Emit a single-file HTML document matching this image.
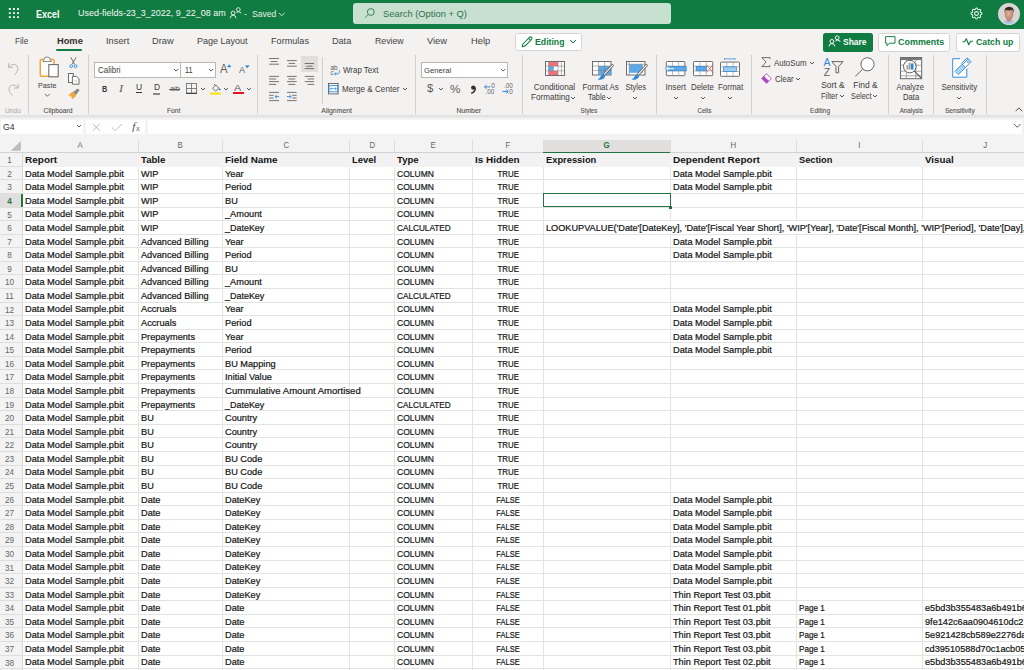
<!DOCTYPE html>
<html><head><meta charset="utf-8"><style>
html,body{margin:0;padding:0;width:1024px;height:670px;overflow:hidden;background:#fff}
body{position:relative}
.t{position:absolute;white-space:nowrap;line-height:1;font-family:'Liberation Sans', sans-serif}
svg{display:block}
</style></head><body>
<div style="position:absolute;left:0.00px;top:0.00px;width:1024.00px;height:29.30px;background:#107c41"></div><svg style="position:absolute;left:0px;top:0px;overflow:visible" width="30" height="28" viewBox="0 0 30 28"><rect x="8.85" y="8.12" width="1.9" height="1.9" rx="0.3" fill="#fff"/><rect x="8.85" y="12.14" width="1.9" height="1.9" rx="0.3" fill="#fff"/><rect x="8.85" y="16.16" width="1.9" height="1.9" rx="0.3" fill="#fff"/><rect x="12.95" y="8.12" width="1.9" height="1.9" rx="0.3" fill="#fff"/><rect x="12.95" y="12.14" width="1.9" height="1.9" rx="0.3" fill="#fff"/><rect x="12.95" y="16.16" width="1.9" height="1.9" rx="0.3" fill="#fff"/><rect x="17.05" y="8.12" width="1.9" height="1.9" rx="0.3" fill="#fff"/><rect x="17.05" y="12.14" width="1.9" height="1.9" rx="0.3" fill="#fff"/><rect x="17.05" y="16.16" width="1.9" height="1.9" rx="0.3" fill="#fff"/></svg><div class="t" style="left:36.40px;top:9.09px;font-size:10.6px;color:#fff;font-weight:700;transform:scaleX(0.8524);transform-origin:left 0;">Excel</div><div class="t" style="left:77.60px;top:9.49px;font-size:9.3px;color:#f4f8f5;transform:scaleX(0.9654);transform-origin:left 0;">Used-fields-23_3_2022, 9_22_08 am</div><svg style="position:absolute;left:229px;top:6.5px;overflow:visible" width="14" height="13" viewBox="0 0 14 13"><g fill="none" stroke="#e3efe7" stroke-width="0.95"><circle cx="4.1" cy="6" r="1.9"/><path d="M1.2 11.2 Q1.4 8.2 4.1 8.2 Q6.8 8.2 7 11.2"/><circle cx="9.3" cy="2.6" r="1.9"/><path d="M7.8 6 Q8 4.8 9.3 4.8 Q12 4.8 12.2 6.4"/></g></svg><div class="t" style="left:244.10px;top:9.59px;font-size:9.3px;color:#e3efe7;transform:scaleX(0.9005);transform-origin:left 0;">-</div><div class="t" style="left:251.70px;top:9.59px;font-size:9.3px;color:#e3efe7;transform:scaleX(0.9251);transform-origin:left 0;">Saved</div><svg style="position:absolute;left:278.09999999999997px;top:11.85px;overflow:visible" width="7.6" height="4.7" viewBox="0 0 7.6 4.7"><path d="M1 1 L3.8 3.7 L6.6 1" fill="none" stroke="#e3efe7" stroke-width="0.9"/></svg><div style="position:absolute;left:353.00px;top:2.80px;width:317.50px;height:21.10px;background:#c8e0d0;border-radius:3px"></div><svg style="position:absolute;left:364px;top:7px;overflow:visible" width="12" height="12" viewBox="0 0 12 12"><g fill="none" stroke="#3d7f58" stroke-width="1"><circle cx="6.8" cy="5" r="3.4"/><path d="M4.4 7.4 L1.3 10.6"/></g></svg><div class="t" style="left:383.10px;top:9.58px;font-size:9.2px;color:#2f6f4a;transform:scaleX(1.0174);transform-origin:left 0;">Search (Option + Q)</div><svg style="position:absolute;left:969.9px;top:6.9px;overflow:visible" width="13" height="13" viewBox="0 0 13 13"><g transform="translate(6.5,6.5)" fill="none" stroke="#e6f1ea" stroke-width="1.05" stroke-linejoin="round"><path d="M0.00 -5.40 L0.21 -5.40 L0.42 -5.38 L0.62 -5.26 L0.79 -5.00 L0.94 -4.71 L1.06 -4.41 L1.17 -4.14 L1.30 -3.99 L1.45 -3.94 L1.61 -3.88 L1.76 -3.81 L1.91 -3.74 L2.10 -3.76 L2.37 -3.87 L2.67 -3.99 L2.97 -4.09 L3.28 -4.16 L3.51 -4.11 L3.67 -3.97 L3.82 -3.82 L3.97 -3.67 L4.11 -3.51 L4.16 -3.28 L4.09 -2.97 L3.99 -2.67 L3.87 -2.37 L3.76 -2.10 L3.74 -1.91 L3.81 -1.76 L3.88 -1.61 L3.94 -1.45 L3.99 -1.30 L4.14 -1.17 L4.41 -1.06 L4.71 -0.94 L5.00 -0.79 L5.26 -0.62 L5.38 -0.42 L5.40 -0.21 L5.40 -0.00 L5.40 0.21 L5.38 0.42 L5.26 0.62 L5.00 0.79 L4.71 0.94 L4.41 1.06 L4.14 1.17 L3.99 1.30 L3.94 1.45 L3.88 1.61 L3.81 1.76 L3.74 1.91 L3.76 2.10 L3.87 2.37 L3.99 2.67 L4.09 2.97 L4.16 3.28 L4.11 3.51 L3.97 3.67 L3.82 3.82 L3.67 3.97 L3.51 4.11 L3.28 4.16 L2.97 4.09 L2.67 3.99 L2.37 3.87 L2.10 3.76 L1.91 3.74 L1.76 3.81 L1.61 3.88 L1.45 3.94 L1.30 3.99 L1.17 4.14 L1.06 4.41 L0.94 4.71 L0.79 5.00 L0.62 5.26 L0.42 5.38 L0.21 5.40 L0.00 5.40 L-0.21 5.40 L-0.42 5.38 L-0.62 5.26 L-0.79 5.00 L-0.94 4.71 L-1.06 4.41 L-1.17 4.14 L-1.30 3.99 L-1.45 3.94 L-1.61 3.88 L-1.76 3.81 L-1.91 3.74 L-2.10 3.76 L-2.37 3.87 L-2.67 3.99 L-2.97 4.09 L-3.28 4.16 L-3.51 4.11 L-3.67 3.97 L-3.82 3.82 L-3.97 3.67 L-4.11 3.51 L-4.16 3.28 L-4.09 2.97 L-3.99 2.67 L-3.87 2.37 L-3.76 2.10 L-3.74 1.91 L-3.81 1.76 L-3.88 1.61 L-3.94 1.45 L-3.99 1.30 L-4.14 1.17 L-4.41 1.06 L-4.71 0.94 L-5.00 0.79 L-5.26 0.62 L-5.38 0.42 L-5.40 0.21 L-5.40 0.00 L-5.40 -0.21 L-5.38 -0.42 L-5.26 -0.62 L-5.00 -0.79 L-4.71 -0.94 L-4.41 -1.06 L-4.14 -1.17 L-3.99 -1.30 L-3.94 -1.45 L-3.88 -1.61 L-3.81 -1.76 L-3.74 -1.91 L-3.76 -2.10 L-3.87 -2.37 L-3.99 -2.67 L-4.09 -2.97 L-4.16 -3.28 L-4.11 -3.51 L-3.97 -3.67 L-3.82 -3.82 L-3.67 -3.97 L-3.51 -4.11 L-3.28 -4.16 L-2.97 -4.09 L-2.67 -3.99 L-2.37 -3.87 L-2.10 -3.76 L-1.91 -3.74 L-1.76 -3.81 L-1.61 -3.88 L-1.45 -3.94 L-1.30 -3.99 L-1.17 -4.14 L-1.06 -4.41 L-0.94 -4.71 L-0.79 -5.00 L-0.62 -5.26 L-0.42 -5.38 L-0.21 -5.40 Z"/><circle r="1.9"/></g></svg><svg style="position:absolute;left:998px;top:2.9px;overflow:visible" width="22" height="22" viewBox="0 0 22 22"><defs><clipPath id="av"><circle cx="11" cy="11" r="10.8"/></clipPath><radialGradient id="fg" cx="0.45" cy="0.45" r="0.65"><stop offset="0" stop-color="#e0b49c"/><stop offset="1" stop-color="#b07a66"/></radialGradient></defs><g clip-path="url(#av)"><rect width="22" height="22" fill="#d8d5d4"/><path d="M2.5 24 Q4 17 11 16.6 Q18 17 19.5 24Z" fill="#b4c7e2"/><path d="M8.6 14 H13.4 V18 Q11 19.4 8.6 18Z" fill="#c08a74"/><ellipse cx="11" cy="11" rx="4.4" ry="5.6" fill="url(#fg)"/><path d="M6.4 10.2 Q5.8 3.8 11.2 3.8 Q16.4 3.8 15.8 10 Q15.4 7.2 13.6 6.8 Q11 7.8 8 6.8 Q6.8 7.6 6.4 10.2Z" fill="#3a2a23"/></g><circle cx="11" cy="11" r="10.7" fill="none" stroke="#e6e6e6" stroke-width="0.5"/></svg><div style="position:absolute;left:0.00px;top:29.30px;width:1024.00px;height:85.70px;background:#f3f2f1"></div><div class="t" style="left:14.60px;top:36.55px;font-size:9px;color:#424242;transform:scaleX(0.9163);transform-origin:left 0;">File</div><div class="t" style="left:56.50px;top:36.55px;font-size:9px;color:#323130;font-weight:700;transform:scaleX(1.0314);transform-origin:left 0;">Home</div><div class="t" style="left:105.60px;top:36.55px;font-size:9px;color:#424242;transform:scaleX(1.0348);transform-origin:left 0;">Insert</div><div class="t" style="left:152.30px;top:36.55px;font-size:9px;color:#424242;transform:scaleX(1.0278);transform-origin:left 0;">Draw</div><div class="t" style="left:197.00px;top:36.55px;font-size:9px;color:#424242;">Page Layout</div><div class="t" style="left:271.00px;top:36.55px;font-size:9px;color:#424242;transform:scaleX(1.0129);transform-origin:left 0;">Formulas</div><div class="t" style="left:332.30px;top:36.55px;font-size:9px;color:#424242;transform:scaleX(1.0097);transform-origin:left 0;">Data</div><div class="t" style="left:375.30px;top:36.55px;font-size:9px;color:#424242;transform:scaleX(0.9724);transform-origin:left 0;">Review</div><div class="t" style="left:427.30px;top:36.55px;font-size:9px;color:#424242;transform:scaleX(1.0331);transform-origin:left 0;">View</div><div class="t" style="left:470.50px;top:36.55px;font-size:9px;color:#424242;transform:scaleX(1.0424);transform-origin:left 0;">Help</div><div style="position:absolute;left:56.10px;top:48.80px;width:26.20px;height:1.90px;background:#107c41;border-radius:1px"></div><div style="position:absolute;left:515.40px;top:32.60px;width:66.40px;height:18.40px;background:#fff;border:0.75px solid #d6d4d2;border-radius:2.5px;box-sizing:border-box"></div><svg style="position:absolute;left:520.5px;top:36px;overflow:visible" width="12" height="12" viewBox="0 0 12 12"><g fill="none" stroke="#107c41" stroke-width="1.05" stroke-linejoin="round"><path d="M1.2 10.8 L1.9 8 L8.7 1.2 Q9.7 0.5 10.6 1.4 Q11.4 2.3 10.7 3.3 L3.9 10.1 Z"/><path d="M7.6 2.3 L9.7 4.4"/></g></svg><div class="t" style="left:534.90px;top:37.99px;font-size:9.3px;color:#107c41;font-weight:700;transform:scaleX(0.9365);transform-origin:left 0;">Editing</div><svg style="position:absolute;left:569.2px;top:39.1px;overflow:visible" width="8" height="5" viewBox="0 0 8 5"><path d="M1 1 L4.0 4 L7 1" fill="none" stroke="#107c41" stroke-width="1.0"/></svg><div style="position:absolute;left:823.20px;top:32.50px;width:49.60px;height:19.00px;background:#107c41;border-radius:2.5px"></div><svg style="position:absolute;left:828.3px;top:35.3px;overflow:visible" width="13" height="12" viewBox="0 0 13 12"><g fill="none" stroke="#fff" stroke-width="1"><circle cx="3.9" cy="6.4" r="1.9"/><path d="M1 11.4 Q1.2 8.6 3.9 8.6 Q6.6 8.6 6.8 11.4"/><circle cx="9.2" cy="2.8" r="1.9"/><path d="M7.6 6.4 Q7.8 5 9.2 5 Q12 5 12.2 7"/></g></svg><div class="t" style="left:842.50px;top:37.98px;font-size:9.2px;color:#fff;font-weight:700;transform:scaleX(0.9199);transform-origin:left 0;">Share</div><div style="position:absolute;left:878.30px;top:32.50px;width:72.00px;height:19.00px;background:#fff;border:0.75px solid #d6d4d2;border-radius:2.5px;box-sizing:border-box"></div><svg style="position:absolute;left:884.5px;top:36.3px;overflow:visible" width="11" height="11" viewBox="0 0 11 11"><path d="M0.6 0.6 H10 V7.2 H4.4 L2 9.8 V7.2 H0.6 Z" fill="none" stroke="#107c41" stroke-width="0.95" stroke-linejoin="round"/></svg><div class="t" style="left:897.70px;top:37.98px;font-size:9.2px;color:#107c41;font-weight:700;transform:scaleX(0.9751);transform-origin:left 0;">Comments</div><div style="position:absolute;left:956.20px;top:32.50px;width:63.50px;height:19.00px;background:#fff;border:0.75px solid #d6d4d2;border-radius:2.5px;box-sizing:border-box"></div><svg style="position:absolute;left:961.6px;top:37.2px;overflow:visible" width="12" height="10" viewBox="0 0 12 10"><path d="M0.5 4.8 H2.6 L4.3 1.8 L6.7 7.8 L8.5 4.2 H11" fill="none" stroke="#107c41" stroke-width="1.1" stroke-linejoin="round"/></svg><div class="t" style="left:975.60px;top:37.98px;font-size:9.2px;color:#107c41;font-weight:700;transform:scaleX(0.9514);transform-origin:left 0;">Catch up</div><div style="position:absolute;left:28.05px;top:54.50px;width:0.75px;height:59.00px;background:#d2d0ce"></div><div style="position:absolute;left:87.65px;top:54.50px;width:0.75px;height:59.00px;background:#d2d0ce"></div><div style="position:absolute;left:257.45px;top:54.50px;width:0.75px;height:59.00px;background:#d2d0ce"></div><div style="position:absolute;left:415.15px;top:54.50px;width:0.75px;height:59.00px;background:#d2d0ce"></div><div style="position:absolute;left:522.25px;top:54.50px;width:0.75px;height:59.00px;background:#d2d0ce"></div><div style="position:absolute;left:656.15px;top:54.50px;width:0.75px;height:59.00px;background:#d2d0ce"></div><div style="position:absolute;left:751.15px;top:54.50px;width:0.75px;height:59.00px;background:#d2d0ce"></div><div style="position:absolute;left:887.95px;top:54.50px;width:0.75px;height:59.00px;background:#d2d0ce"></div><div style="position:absolute;left:932.85px;top:54.50px;width:0.75px;height:59.00px;background:#d2d0ce"></div><div style="position:absolute;left:985.75px;top:54.50px;width:0.75px;height:59.00px;background:#d2d0ce"></div><div style="position:absolute;left:321.65px;top:56.80px;width:0.75px;height:46.80px;background:#d2d0ce"></div><div class="t" style="left:5.02px;top:107.69px;font-size:6.6px;color:#b3b0ad;transform:scaleX(1.0085);transform-origin:center 0;-webkit-text-stroke:0.1px #b3b0ad;">Undo</div><div class="t" style="left:44.18px;top:107.69px;font-size:6.6px;color:#55534f;transform:scaleX(1.0271);transform-origin:center 0;-webkit-text-stroke:0.1px #55534f;">Clipboard</div><div class="t" style="left:167.10px;top:107.69px;font-size:6.6px;color:#55534f;transform:scaleX(1.0149);transform-origin:center 0;-webkit-text-stroke:0.1px #55534f;">Font</div><div class="t" style="left:321.74px;top:107.69px;font-size:6.6px;color:#55534f;transform:scaleX(1.0468);transform-origin:center 0;-webkit-text-stroke:0.1px #55534f;">Alignment</div><div class="t" style="left:456.67px;top:107.69px;font-size:6.6px;color:#55534f;transform:scaleX(1.0489);transform-origin:center 0;-webkit-text-stroke:0.1px #55534f;">Number</div><div class="t" style="left:580.12px;top:107.69px;font-size:6.6px;color:#55534f;transform:scaleX(0.9350);transform-origin:center 0;-webkit-text-stroke:0.1px #55534f;">Styles</div><div class="t" style="left:696.67px;top:107.69px;font-size:6.6px;color:#55534f;transform:scaleX(0.9484);transform-origin:center 0;-webkit-text-stroke:0.1px #55534f;">Cells</div><div class="t" style="left:809.71px;top:107.69px;font-size:6.6px;color:#55534f;transform:scaleX(0.9964);transform-origin:center 0;-webkit-text-stroke:0.1px #55534f;">Editing</div><div class="t" style="left:898.52px;top:107.69px;font-size:6.6px;color:#55534f;transform:scaleX(0.9405);transform-origin:center 0;-webkit-text-stroke:0.1px #55534f;">Analysis</div><div class="t" style="left:944.76px;top:107.69px;font-size:6.6px;color:#55534f;transform:scaleX(1.0072);transform-origin:center 0;-webkit-text-stroke:0.1px #55534f;">Sensitivity</div><svg style="position:absolute;left:7px;top:62px;overflow:visible" width="13" height="34" viewBox="0 0 13 34"><g fill="none" stroke="#b3b0ad" stroke-width="0.9" stroke-linecap="round" stroke-linejoin="round"><path d="M1.6 1.6 V5.4 H5.4"/><path d="M1.8 5.2 Q4.4 1.8 7.6 2.4 Q11 3.2 10.9 6.6 Q10.8 9.6 7.9 12.6"/><path d="M11.2 22.2 V26 H7.4"/><path d="M11 25.8 Q8.4 22.4 5.2 23 Q1.8 23.8 1.9 27.2 Q2 30.2 4.9 33.2"/></g></svg><svg style="position:absolute;left:39px;top:56px;overflow:visible" width="22" height="22" viewBox="0 0 22 22"><rect x="1.3" y="3.4" width="13.6" height="16.8" rx="1" fill="#fff" stroke="#f2a533" stroke-width="1.5"/><path d="M5 3.6 Q5 1 8.1 1 Q11.2 1 11.2 3.6 L12.4 5.4 H3.8 Z" fill="#fff" stroke="#7a7876" stroke-width="0.9"/><rect x="9.8" y="8.6" width="9.4" height="12.2" fill="#fff" stroke="#6e6c6a" stroke-width="1.1"/></svg><div class="t" style="left:36.97px;top:81.90px;font-size:8px;color:#3d3c3b;transform:scaleX(0.8940);transform-origin:center 0;">Paste</div><svg style="position:absolute;left:43.7px;top:93.44999999999999px;overflow:visible" width="6.6" height="4.3" viewBox="0 0 6.6 4.3"><path d="M1 1 L3.3 3.3 L5.6 1" fill="none" stroke="#605e5c" stroke-width="0.9"/></svg><svg style="position:absolute;left:67.5px;top:57px;overflow:visible" width="11" height="12" viewBox="0 0 11 12"><g fill="none" stroke-width="0.9"><path d="M2.8 0.3 L6.7 7.4 M8 0.3 L4.1 7.4" stroke="#605e5c"/><circle cx="3.2" cy="9.2" r="1.4" stroke="#2b88d8"/><circle cx="7.6" cy="9.2" r="1.4" stroke="#2b88d8"/></g></svg><svg style="position:absolute;left:67.6px;top:72.6px;overflow:visible" width="12" height="12" viewBox="0 0 12 12"><g fill="#fff" stroke="#605e5c" stroke-width="0.9"><rect x="0.5" y="0.5" width="4.8" height="9"/><path d="M4.4 3.4 H8.6 L11 5.8 V11.2 H4.4 Z"/></g><path d="M6.2 8 H9" stroke="#999" stroke-width="0.6"/></svg><svg style="position:absolute;left:67.6px;top:88.4px;overflow:visible" width="12" height="12" viewBox="0 0 12 12"><path d="M0.6 7 L4.8 3.6 L8.4 7.4 L4.6 11.2 Z" fill="#f2a533"/><path d="M1.8 7.4 L4.4 9.8" stroke="#fff" stroke-width="0.7"/><path d="M5.2 3.9 L9.4 0.8 L11.2 2.6 L8 7 Z" fill="#8a8886"/><path d="M9.4 0.8 L11.2 2.6" stroke="#605e5c" stroke-width="0.8"/></svg><div style="position:absolute;left:94.40px;top:61.70px;width:121.30px;height:16.30px;background:#fff;border:0.75px solid #bab8b6;box-sizing:border-box"></div><div style="position:absolute;left:180.40px;top:61.70px;width:0.75px;height:16.30px;background:#bab8b6"></div><div class="t" style="left:97.70px;top:66.83px;font-size:8.2px;color:#3d3c3b;transform:scaleX(0.9734);transform-origin:left 0;">Calibri</div><div class="t" style="left:184.60px;top:66.83px;font-size:8.2px;color:#3d3c3b;transform:scaleX(0.8941);transform-origin:left 0;">11</div><svg style="position:absolute;left:173.4px;top:67.95px;overflow:visible" width="6.2" height="4.1" viewBox="0 0 6.2 4.1"><path d="M1 1 L3.1 3.1 L5.2 1" fill="none" stroke="#444" stroke-width="0.9"/></svg><svg style="position:absolute;left:208.4px;top:67.95px;overflow:visible" width="6.2" height="4.1" viewBox="0 0 6.2 4.1"><path d="M1 1 L3.1 3.1 L5.2 1" fill="none" stroke="#444" stroke-width="0.9"/></svg><div class="t" style="left:220.30px;top:63.20px;font-size:12px;color:#605e5c;transform:scaleX(0.9481);transform-origin:left 0;">A</div><svg style="position:absolute;left:226.8px;top:64.2px;overflow:visible" width="5" height="3.4" viewBox="0 0 5 3.4"><path d="M0.5 2.9 L2.25 0.7 L4 2.9 Z" fill="#2b88d8" stroke="#2b88d8" stroke-width="0.6" stroke-linejoin="round"/></svg><div class="t" style="left:239.00px;top:65.24px;font-size:9.6px;color:#605e5c;transform:scaleX(0.9522);transform-origin:left 0;">A</div><svg style="position:absolute;left:244.7px;top:64.6px;overflow:visible" width="5" height="3.4" viewBox="0 0 5 3.4"><path d="M0.5 0.7 L2.25 2.9 L4 0.7 Z" fill="#2b88d8" stroke="#2b88d8" stroke-width="0.6" stroke-linejoin="round"/></svg><div class="t" style="left:101.70px;top:84.11px;font-size:9.4px;color:#3b3a39;font-weight:700;transform:scaleX(0.7816);transform-origin:left 0;">B</div><div class="t" style="left:119.30px;top:83.94px;font-size:9.6px;color:#605e5c;font-family:'Liberation Serif', serif;font-style:italic;transform:scaleX(1.2800);transform-origin:left 0;">I</div><div class="t" style="left:135.70px;top:84.13px;font-size:8.2px;color:#3b3a39;transform:scaleX(1.0470);transform-origin:left 0;">U</div><div style="position:absolute;left:135.50px;top:91.80px;width:6.60px;height:0.80px;background:#3b3a39"></div><div class="t" style="left:153.60px;top:84.13px;font-size:8.2px;color:#3b3a39;transform:scaleX(1.0301);transform-origin:left 0;">D</div><div style="position:absolute;left:153.40px;top:92.50px;width:6.60px;height:2.00px;background:#8a8886"></div><div class="t" style="left:169.60px;top:85.30px;font-size:8px;color:#605e5c;transform:scaleX(1.1228);transform-origin:left 0;">ab</div><div style="position:absolute;left:169.00px;top:89.00px;width:11.00px;height:0.80px;background:#605e5c"></div><svg style="position:absolute;left:186.2px;top:83.4px;overflow:visible" width="11" height="11" viewBox="0 0 11 11"><g fill="none" stroke="#605e5c" stroke-width="0.75"><rect x="0.4" y="0.4" width="10.2" height="10.2"/><path d="M5.5 0.4 V10.6 M0.4 5.5 H10.6"/></g><rect x="0" y="9.7" width="11" height="1.3" fill="#444"/></svg><svg style="position:absolute;left:199.6px;top:87.2px;overflow:visible" width="6" height="4" viewBox="0 0 6 4"><path d="M1 1 L3.0 3 L5 1" fill="none" stroke="#444" stroke-width="0.9"/></svg><svg style="position:absolute;left:209.8px;top:82.6px;overflow:visible" width="12" height="12" viewBox="0 0 12 12"><path d="M2.6 5.2 L5.8 2 L8.8 5 L5.6 8.2 Z" fill="none" stroke="#605e5c" stroke-width="0.9"/><path d="M4 1 L5.8 2.8" stroke="#605e5c" stroke-width="0.8"/><circle cx="9.7" cy="6.3" r="0.9" fill="#1f5f9a"/><rect x="0" y="9.6" width="11" height="2" fill="#fde300"/></svg><svg style="position:absolute;left:222.7px;top:87.2px;overflow:visible" width="6" height="4" viewBox="0 0 6 4"><path d="M1 1 L3.0 3 L5 1" fill="none" stroke="#444" stroke-width="0.9"/></svg><div class="t" style="left:234.20px;top:82.77px;font-size:9.8px;color:#605e5c;transform:scaleX(1.0998);transform-origin:left 0;">A</div><div style="position:absolute;left:232.80px;top:92.30px;width:10.80px;height:1.90px;background:#e81123"></div><svg style="position:absolute;left:246.0px;top:87.2px;overflow:visible" width="6" height="4" viewBox="0 0 6 4"><path d="M1 1 L3.0 3 L5 1" fill="none" stroke="#444" stroke-width="0.9"/></svg><div style="position:absolute;left:301.20px;top:55.90px;width:16.40px;height:16.00px;background:#e1dfdd"></div><svg style="position:absolute;left:0;top:0;overflow:visible" width="1" height="1"><path d="M269.10 58.50 H279.00" stroke="#605e5c" stroke-width="0.85"/><path d="M270.70 61.50 H277.40" stroke="#605e5c" stroke-width="0.85"/><path d="M269.10 64.20 H279.00" stroke="#605e5c" stroke-width="0.85"/><path d="M287.00 60.60 H296.70" stroke="#605e5c" stroke-width="0.85"/><path d="M288.60 63.40 H295.10" stroke="#605e5c" stroke-width="0.85"/><path d="M287.00 66.20 H296.70" stroke="#605e5c" stroke-width="0.85"/><path d="M304.70 63.50 H314.10" stroke="#605e5c" stroke-width="0.85"/><path d="M306.30 66.20 H312.50" stroke="#605e5c" stroke-width="0.85"/><path d="M304.70 68.60 H314.10" stroke="#605e5c" stroke-width="0.85"/><path d="M269.10 76.40 H279.00" stroke="#605e5c" stroke-width="0.85"/><path d="M269.10 79.00 H276.20" stroke="#605e5c" stroke-width="0.85"/><path d="M269.10 81.60 H279.00" stroke="#605e5c" stroke-width="0.85"/><path d="M269.10 84.40 H276.20" stroke="#605e5c" stroke-width="0.85"/><path d="M287.00 76.40 H296.70" stroke="#605e5c" stroke-width="0.85"/><path d="M288.40 79.00 H295.30" stroke="#605e5c" stroke-width="0.85"/><path d="M287.00 81.60 H296.70" stroke="#605e5c" stroke-width="0.85"/><path d="M288.40 84.40 H295.30" stroke="#605e5c" stroke-width="0.85"/><path d="M304.70 76.40 H314.10" stroke="#605e5c" stroke-width="0.85"/><path d="M307.60 79.00 H314.10" stroke="#605e5c" stroke-width="0.85"/><path d="M304.70 81.60 H314.10" stroke="#605e5c" stroke-width="0.85"/><path d="M307.60 84.40 H314.10" stroke="#605e5c" stroke-width="0.85"/><path d="M269.10 92.40 H279.00" stroke="#605e5c" stroke-width="0.85"/><path d="M269.10 95.30 H273.60" stroke="#605e5c" stroke-width="0.85"/><path d="M269.10 98.00 H273.60" stroke="#605e5c" stroke-width="0.85"/><path d="M269.10 100.60 H279.00" stroke="#605e5c" stroke-width="0.85"/><path d="M275 96.6 H279.2 M275 96.6 L276.8 94.9 M275 96.6 L276.8 98.3" fill="none" stroke="#2b88d8" stroke-width="0.9"/><path d="M287.00 92.40 H296.70" stroke="#605e5c" stroke-width="0.85"/><path d="M292.20 95.30 H296.70" stroke="#605e5c" stroke-width="0.85"/><path d="M292.20 98.00 H296.70" stroke="#605e5c" stroke-width="0.85"/><path d="M287.00 100.60 H296.70" stroke="#605e5c" stroke-width="0.85"/><path d="M287 96.6 H291.2 M291.2 96.6 L289.4 94.9 M291.2 96.6 L289.4 98.3" fill="none" stroke="#2b88d8" stroke-width="0.9"/></svg><svg style="position:absolute;left:330.4px;top:63.6px;overflow:visible" width="12" height="12" viewBox="0 0 12 12"><text x="0.4" y="5.8" font-size="6.4" font-family="Liberation Sans" fill="#605e5c">ab</text><text x="0.4" y="11" font-size="6.4" font-family="Liberation Sans" fill="#605e5c">c</text><path d="M9.2 6.2 Q10.6 9.6 7.4 9.8 H4.6 M6 8.4 L4.6 9.8 L6 11.2" fill="none" stroke="#2b88d8" stroke-width="0.9"/></svg><div class="t" style="left:342.80px;top:66.09px;font-size:8.6px;color:#3d3c3b;transform:scaleX(0.9225);transform-origin:left 0;">Wrap Text</div><svg style="position:absolute;left:327.6px;top:82.8px;overflow:visible" width="11" height="11.5" viewBox="0 0 11 11.5"><rect x="0.5" y="0.5" width="9.6" height="10.4" fill="#fff" stroke="#605e5c" stroke-width="0.9"/><rect x="1" y="2.6" width="8.6" height="6.2" fill="#fff" stroke="#2b88d8" stroke-width="0.9"/><path d="M2.3 5.7 H8.3 M2.3 5.7 L3.5 4.6 M2.3 5.7 L3.5 6.8 M8.3 5.7 L7.1 4.6 M8.3 5.7 L7.1 6.8" stroke="#2b88d8" stroke-width="0.75" fill="none"/></svg><div class="t" style="left:341.90px;top:85.09px;font-size:8.6px;color:#3d3c3b;transform:scaleX(0.9461);transform-origin:left 0;">Merge &amp; Center</div><svg style="position:absolute;left:402.0px;top:87.3px;overflow:visible" width="6" height="4" viewBox="0 0 6 4"><path d="M1 1 L3.0 3 L5 1" fill="none" stroke="#444" stroke-width="0.9"/></svg><div style="position:absolute;left:421.00px;top:61.80px;width:86.70px;height:15.90px;background:#fff;border:0.75px solid #bab8b6;box-sizing:border-box"></div><div class="t" style="left:423.90px;top:67.10px;font-size:8px;color:#3d3c3b;transform:scaleX(0.9554);transform-origin:left 0;">General</div><svg style="position:absolute;left:499.7px;top:67.95px;overflow:visible" width="6.2" height="4.1" viewBox="0 0 6.2 4.1"><path d="M1 1 L3.1 3.1 L5.2 1" fill="none" stroke="#444" stroke-width="0.9"/></svg><div class="t" style="left:426.70px;top:84.26px;font-size:10.4px;color:#605e5c;transform:scaleX(1.0897);transform-origin:left 0;">$</div><svg style="position:absolute;left:437.9px;top:87.0px;overflow:visible" width="6" height="4" viewBox="0 0 6 4"><path d="M1 1 L3.0 3 L5 1" fill="none" stroke="#444" stroke-width="0.9"/></svg><div class="t" style="left:449.60px;top:84.63px;font-size:10.2px;color:#605e5c;transform:scaleX(1.1476);transform-origin:left 0;">%</div><svg style="position:absolute;left:469.6px;top:84.6px;overflow:visible" width="7" height="9" viewBox="0 0 7 9"><circle cx="3.3" cy="2.6" r="2.2" fill="#323130"/><path d="M5.2 2.6 Q5.6 6.6 1.2 8.4" fill="none" stroke="#323130" stroke-width="1.5"/></svg><svg style="position:absolute;left:484.4px;top:82.6px;overflow:visible" width="12" height="12" viewBox="0 0 12 12"><path d="M0.6 3.9 H6.4 M0.6 3.9 L2.6 2 M0.6 3.9 L2.6 5.8" stroke="#2b88d8" stroke-width="1" fill="none"/><text x="7.2" y="5.1" font-size="6.4" font-family="Liberation Sans" fill="#605e5c">0</text><text x="1.4" y="11" font-size="6.4" font-family="Liberation Sans" fill="#605e5c">.00</text></svg><svg style="position:absolute;left:501.8px;top:82.6px;overflow:visible" width="12" height="12" viewBox="0 0 12 12"><text x="2" y="5.1" font-size="6.4" font-family="Liberation Sans" fill="#605e5c">.00</text><path d="M0.4 8.4 H6.2 M6.2 8.4 L4.2 6.5 M6.2 8.4 L4.2 10.3" stroke="#2b88d8" stroke-width="1" fill="none"/><text x="5.6" y="11" font-size="6.4" font-family="Liberation Sans" fill="#605e5c">.0</text></svg><svg style="position:absolute;left:545.2px;top:61px;overflow:visible" width="20" height="15" viewBox="0 0 20 15"><rect x="0.5" y="0.5" width="19" height="14" fill="#fff" stroke="#605e5c" stroke-width="0.9"/><rect x="3.6" y="1" width="9.4" height="4.2" fill="#f1707b"/><rect x="3.6" y="9.8" width="9.4" height="4.2" fill="#f1707b"/><rect x="3.6" y="5.2" width="5.2" height="4.6" fill="#5ca8e8"/><g stroke="#7a7876" stroke-width="0.55"><path d="M0.5 5.1 H19.5 M0.5 9.8 H19.5 M3.6 0.5 V14.5 M13 0.5 V14.5 M16.4 0.5 V14.5"/></g></svg><div class="t" style="left:533.10px;top:82.99px;font-size:8.6px;color:#3d3c3b;transform:scaleX(0.9628);transform-origin:center 0;">Conditional</div><div class="t" style="left:531.00px;top:93.49px;font-size:8.6px;color:#3d3c3b;transform:scaleX(0.9445);transform-origin:left 0;">Formatting</div><svg style="position:absolute;left:570.2px;top:96.0px;overflow:visible" width="6" height="4" viewBox="0 0 6 4"><path d="M1 1 L3.0 3 L5 1" fill="none" stroke="#444" stroke-width="0.9"/></svg><svg style="position:absolute;left:591.5px;top:61px;overflow:visible" width="22" height="19" viewBox="0 0 22 19"><rect x="0.5" y="0.5" width="18.5" height="13.5" fill="#fff" stroke="#605e5c" stroke-width="0.9"/><rect x="6.4" y="5" width="12.6" height="9" fill="#5ca8e8"/><g stroke="#7a7876" stroke-width="0.55"><path d="M0.5 5 H19 M0.5 9.4 H19 M6.4 0.5 V14 M12.6 0.5 V14"/></g><path d="M20.4 4.4 L12.4 13.2" stroke="#605e5c" stroke-width="2.7" stroke-linecap="round"/><path d="M20.4 4.4 L12.4 13.2" stroke="#fff" stroke-width="1.1" stroke-linecap="round"/><path d="M5.6 18.4 Q7.6 17.8 8.6 15.6 Q9.8 13.4 11.6 13.6 Q13.4 14 13 15.8 Q12.4 18 9.6 18.6 Q7.4 18.9 5.6 18.4Z" fill="#2b88d8"/></svg><div class="t" style="left:581.11px;top:82.99px;font-size:8.6px;color:#3d3c3b;transform:scaleX(0.9216);transform-origin:center 0;">Format As</div><div class="t" style="left:588.00px;top:93.49px;font-size:8.6px;color:#3d3c3b;transform:scaleX(0.8614);transform-origin:left 0;">Table</div><svg style="position:absolute;left:606.3px;top:96.0px;overflow:visible" width="6" height="4" viewBox="0 0 6 4"><path d="M1 1 L3.0 3 L5 1" fill="none" stroke="#444" stroke-width="0.9"/></svg><svg style="position:absolute;left:626.2px;top:61px;overflow:visible" width="22" height="19" viewBox="0 0 22 19"><rect x="0.5" y="0.5" width="18.5" height="13.5" fill="#fff" stroke="#605e5c" stroke-width="0.9"/><rect x="3.2" y="3.2" width="13.6" height="8.6" fill="#5ca8e8"/><path d="M0.5 3.2 H19 M3.2 0.5 V14" stroke="#7a7876" stroke-width="0.55"/><path d="M20.4 4.4 L12.4 13.2" stroke="#605e5c" stroke-width="2.7" stroke-linecap="round"/><path d="M20.4 4.4 L12.4 13.2" stroke="#fff" stroke-width="1.1" stroke-linecap="round"/><path d="M5.6 18.4 Q7.6 17.8 8.6 15.6 Q9.8 13.4 11.6 13.6 Q13.4 14 13 15.8 Q12.4 18 9.6 18.6 Q7.4 18.9 5.6 18.4Z" fill="#2b88d8"/></svg><div class="t" style="left:623.60px;top:82.99px;font-size:8.6px;color:#3d3c3b;transform:scaleX(0.8801);transform-origin:center 0;">Styles</div><svg style="position:absolute;left:632.4px;top:96.0px;overflow:visible" width="6" height="4" viewBox="0 0 6 4"><path d="M1 1 L3.0 3 L5 1" fill="none" stroke="#444" stroke-width="0.9"/></svg><svg style="position:absolute;left:665px;top:61px;overflow:visible" width="22" height="15" viewBox="0 0 22 15"><rect x="1.3" y="0.5" width="18.6" height="14.2" fill="#fff" stroke="#605e5c" stroke-width="0.9" rx="0.8"/><g stroke="#8a8886" stroke-width="0.55"><path d="M1.3 5.2 H19.900000000000002 M1.3 9.9 H19.900000000000002 M7.50 0.5 V14.7 M13.70 0.5 V14.7"/></g><rect x="4.8" y="5.2" width="16.4" height="4.7" fill="#5ca8e8" stroke="#1f6fb8" stroke-width="0.5"/><path d="M0.2 7.55 L3.6 4.4 V6.4 H9.4 V8.7 H3.6 V10.7 Z" fill="#dbeefa" stroke="#2b88d8" stroke-width="0.6"/></svg><div class="t" style="left:664.75px;top:83.39px;font-size:8.6px;color:#3d3c3b;transform:scaleX(0.9442);transform-origin:center 0;">Insert</div><svg style="position:absolute;left:693px;top:61px;overflow:visible" width="22" height="15" viewBox="0 0 22 15"><rect x="0.5" y="0.5" width="19.2" height="14.2" fill="#fff" stroke="#605e5c" stroke-width="0.9" rx="0.8"/><g stroke="#8a8886" stroke-width="0.55"><path d="M0.5 5.2 H19.7 M0.5 9.9 H19.7 M6.90 0.5 V14.7 M13.30 0.5 V14.7"/></g><rect x="3" y="5.2" width="10.2" height="4.7" fill="#5ca8e8" stroke="#1f6fb8" stroke-width="0.5"/><path d="M13.2 3.6 L20.2 11.6 M20.2 3.6 L13.2 11.6" stroke="#e8606a" stroke-width="0.9"/></svg><div class="t" style="left:690.18px;top:83.39px;font-size:8.6px;color:#3d3c3b;transform:scaleX(0.9218);transform-origin:center 0;">Delete</div><svg style="position:absolute;left:720.2px;top:58.2px;overflow:visible" width="22" height="19" viewBox="0 0 22 19"><path d="M4.6 0.9 H15 M4.6 0 V1.8 M15 0 V1.8" stroke="#2b88d8" stroke-width="0.75"/><g transform="translate(0,3.6)"><rect x="0.5" y="0.5" width="19" height="14.2" fill="#fff" stroke="#605e5c" stroke-width="0.9" rx="0.8"/><g stroke="#8a8886" stroke-width="0.55"><path d="M0.5 5.2 H19.5 M0.5 9.9 H19.5 M6.83 0.5 V14.7 M13.17 0.5 V14.7"/></g><rect x="6.8" y="5.2" width="6.3" height="4.7" fill="#5ca8e8"/><path d="M3.5 5.2 H16.5 V9.9 H3.5 Z" fill="#9cccf2" stroke="#1f6fb8" stroke-width="0.6"/></g></svg><div class="t" style="left:716.79px;top:83.39px;font-size:8.6px;color:#3d3c3b;transform:scaleX(0.9258);transform-origin:center 0;">Format</div><svg style="position:absolute;left:672.5px;top:95.6px;overflow:visible" width="6" height="4" viewBox="0 0 6 4"><path d="M1 1 L3.0 3 L5 1" fill="none" stroke="#444" stroke-width="0.9"/></svg><svg style="position:absolute;left:699.7px;top:95.6px;overflow:visible" width="6" height="4" viewBox="0 0 6 4"><path d="M1 1 L3.0 3 L5 1" fill="none" stroke="#444" stroke-width="0.9"/></svg><svg style="position:absolute;left:726.9px;top:95.6px;overflow:visible" width="6" height="4" viewBox="0 0 6 4"><path d="M1 1 L3.0 3 L5 1" fill="none" stroke="#444" stroke-width="0.9"/></svg><svg style="position:absolute;left:760.8px;top:57.2px;overflow:visible" width="11" height="11" viewBox="0 0 11 11"><path d="M9 2 V0.6 H0.9 L5.1 5 L0.9 9.6 H9 V8.2" fill="none" stroke="#605e5c" stroke-width="0.9" stroke-linejoin="round"/></svg><div class="t" style="left:773.90px;top:59.19px;font-size:8.6px;color:#3d3c3b;transform:scaleX(0.9191);transform-origin:left 0;">AutoSum</div><svg style="position:absolute;left:809.2px;top:61.0px;overflow:visible" width="6" height="4" viewBox="0 0 6 4"><path d="M1 1 L3.0 3 L5 1" fill="none" stroke="#444" stroke-width="0.9"/></svg><svg style="position:absolute;left:761.4px;top:73.4px;overflow:visible" width="11" height="11" viewBox="0 0 11 11"><path d="M0.7 5.4 L5.4 0.7 L10.3 5.6 L5.6 10.3 Z" fill="#fff" stroke="#b146c2" stroke-width="0.9" stroke-linejoin="round"/><path d="M0.7 5.4 L3 3.1 L7.9 8 L5.6 10.3 Z" fill="#b146c2"/></svg><div class="t" style="left:774.90px;top:75.29px;font-size:8.6px;color:#3d3c3b;transform:scaleX(0.9052);transform-origin:left 0;">Clear</div><svg style="position:absolute;left:795.2px;top:77.3px;overflow:visible" width="6" height="4" viewBox="0 0 6 4"><path d="M1 1 L3.0 3 L5 1" fill="none" stroke="#444" stroke-width="0.9"/></svg><svg style="position:absolute;left:823.4px;top:56.6px;overflow:visible" width="22" height="20" viewBox="0 0 22 20"><text x="0.6" y="8.9" font-size="10.4" font-family="Liberation Sans" fill="#2b88d8">A</text><text x="0.8" y="18.6" font-size="10.4" font-family="Liberation Sans" fill="#605e5c">Z</text><path d="M8.8 4.6 H20 L15.6 9.6 V15.8 H13 V9.6 Z" fill="none" stroke="#605e5c" stroke-width="0.95" stroke-linejoin="round"/></svg><div class="t" style="left:821.25px;top:80.99px;font-size:8.6px;color:#3d3c3b;transform:scaleX(0.9878);transform-origin:center 0;">Sort &amp;</div><div class="t" style="left:820.90px;top:91.69px;font-size:8.6px;color:#3d3c3b;transform:scaleX(0.8739);transform-origin:left 0;">Filter</div><svg style="position:absolute;left:838.5px;top:94.2px;overflow:visible" width="6" height="4" viewBox="0 0 6 4"><path d="M1 1 L3.0 3 L5 1" fill="none" stroke="#444" stroke-width="0.9"/></svg><svg style="position:absolute;left:854px;top:56px;overflow:visible" width="22" height="22" viewBox="0 0 22 22"><circle cx="13.5" cy="8.3" r="6.6" fill="#fff" stroke="#605e5c" stroke-width="0.95"/><path d="M8.8 13 L1.3 20.4" stroke="#605e5c" stroke-width="0.95"/></svg><div class="t" style="left:852.58px;top:80.99px;font-size:8.6px;color:#3d3c3b;transform:scaleX(0.9781);transform-origin:center 0;">Find &amp;</div><div class="t" style="left:850.50px;top:91.69px;font-size:8.6px;color:#3d3c3b;transform:scaleX(0.8581);transform-origin:left 0;">Select</div><svg style="position:absolute;left:872.2px;top:94.2px;overflow:visible" width="6" height="4" viewBox="0 0 6 4"><path d="M1 1 L3.0 3 L5 1" fill="none" stroke="#444" stroke-width="0.9"/></svg><svg style="position:absolute;left:899.8px;top:57.2px;overflow:visible" width="23" height="23" viewBox="0 0 23 23"><rect x="0.5" y="0.5" width="21.2" height="21.2" fill="#fff" stroke="#605e5c" stroke-width="0.95"/><rect x="0.5" y="0.5" width="21.2" height="2.6" fill="#7a7876"/><g stroke="#8a8886" stroke-width="0.75"><path d="M0.5 8.2 H21.7 M0.5 14.2 H21.7 M0.5 18.8 H21.7 M6.4 2.9 V21.7 M15.8 2.9 V21.7"/></g><circle cx="9.8" cy="9.6" r="6.3" fill="#fff" stroke="#605e5c" stroke-width="1"/><path d="M14.3 14.1 L21.2 21" stroke="#605e5c" stroke-width="1.2"/><rect x="6.4" y="8.2" width="1.8" height="4.4" fill="#a19f9d"/><rect x="8.6" y="5.6" width="1.9" height="7" fill="#a19f9d"/><rect x="10.9" y="6.4" width="2.6" height="6.2" fill="#2b88d8"/></svg><div class="t" style="left:895.31px;top:82.89px;font-size:8.6px;color:#3d3c3b;transform:scaleX(0.8961);transform-origin:center 0;">Analyze</div><div class="t" style="left:901.72px;top:93.39px;font-size:8.6px;color:#3d3c3b;transform:scaleX(0.9033);transform-origin:center 0;">Data</div><svg style="position:absolute;left:951.6px;top:57.4px;overflow:visible" width="20" height="21" viewBox="0 0 20 21"><path d="M8.1 1.7 H0.7 V20.2 H14.8 V11.6" fill="#fff" stroke="#2b88d8" stroke-width="0.95"/><g transform="translate(8.2 12.4) rotate(-45)"><rect x="-5" y="-2.3" width="10" height="4.6" fill="#cfe6f8" stroke="#2b88d8" stroke-width="0.8"/><path d="M-3 -2.3 V2.3 M-1 -2.3 V2.3 M1 -2.3 V2.3 M3 -2.3 V2.3" stroke="#2b88d8" stroke-width="0.55"/></g><g transform="translate(14.2 5.6) rotate(-45)"><rect x="-4" y="-2.8" width="8" height="5.6" fill="#fff" stroke="#2b88d8" stroke-width="0.9"/><path d="M-4 -1.2 H4" stroke="#2b88d8" stroke-width="0.9"/><circle cx="2" cy="0.8" r="0.9" fill="none" stroke="#2b88d8" stroke-width="0.7"/></g></svg><div class="t" style="left:940.16px;top:82.89px;font-size:8.6px;color:#3d3c3b;transform:scaleX(0.9202);transform-origin:center 0;">Sensitivity</div><svg style="position:absolute;left:956.0px;top:95.9px;overflow:visible" width="6" height="4" viewBox="0 0 6 4"><path d="M1 1 L3.0 3 L5 1" fill="none" stroke="#444" stroke-width="0.9"/></svg><svg style="position:absolute;left:1014.8px;top:106.8px;overflow:visible" width="8" height="5" viewBox="0 0 8 5"><path d="M0.6 4.2 L3.9 0.9 L7.2 4.2" fill="none" stroke="#444" stroke-width="0.95"/></svg><div style="position:absolute;left:0.00px;top:115.00px;width:1024.00px;height:2.60px;background:linear-gradient(#e0dfde,#ebeaea)"></div><div style="position:absolute;left:0.00px;top:117.60px;width:1024.00px;height:22.40px;background:#f3f3f3"></div><div style="position:absolute;left:1.30px;top:119.60px;width:81.70px;height:14.50px;background:#fff"></div><div class="t" style="left:2.50px;top:122.75px;font-size:9px;color:#323130;transform:scaleX(0.9654);transform-origin:left 0;">G4</div><svg style="position:absolute;left:75.9px;top:124.4px;overflow:visible" width="6" height="4" viewBox="0 0 6 4"><path d="M1 1 L3.0 3 L5 1" fill="none" stroke="#605e5c" stroke-width="1"/></svg><div style="position:absolute;left:85.60px;top:119.60px;width:59.80px;height:14.50px;background:#fff"></div><svg style="position:absolute;left:92.2px;top:122.6px;overflow:visible" width="9" height="9" viewBox="0 0 9 9"><path d="M0.8 0.8 L7.8 7.8 M7.8 0.8 L0.8 7.8" stroke="#b3b0ad" stroke-width="0.85"/></svg><svg style="position:absolute;left:110.6px;top:123px;overflow:visible" width="12" height="9" viewBox="0 0 12 9"><path d="M0.8 4.4 L4.4 7.6 L11 1" fill="none" stroke="#b3b0ad" stroke-width="0.85"/></svg><div class="t" style="left:132.40px;top:122.40px;font-size:10px;color:#605e5c;font-family:'Liberation Serif', serif;font-style:italic;transform:scaleX(1.2944);transform-origin:left 0;">f</div><div class="t" style="left:135.60px;top:124.61px;font-size:7.4px;color:#605e5c;font-family:'Liberation Serif', serif;font-style:italic;transform:scaleX(1.1581);transform-origin:left 0;">x</div><div style="position:absolute;left:148.40px;top:119.60px;width:873.60px;height:14.50px;background:#fff"></div><svg style="position:absolute;left:1013.1px;top:123.14999999999999px;overflow:visible" width="8.6" height="5.3" viewBox="0 0 8.6 5.3"><path d="M1 1 L4.3 4.3 L7.6 1" fill="none" stroke="#605e5c" stroke-width="1"/></svg><div style="position:absolute;left:0.00px;top:139.60px;width:1024.00px;height:13.40px;background:#f3f3f3"></div><div style="position:absolute;left:0.00px;top:153.00px;width:22.40px;height:517.00px;background:#f3f3f3"></div><svg style="position:absolute;left:11.2px;top:141.2px;overflow:visible" width="10" height="10" viewBox="0 0 10 10"><path d="M9.8 0 V9.8 H0 Z" fill="#bdbcbb"/></svg><div style="position:absolute;left:543.30px;top:140.00px;width:127.20px;height:13.00px;background:#e1dfdd"></div><div style="position:absolute;left:0.00px;top:193.73px;width:22.40px;height:13.58px;background:#e1dfdd"></div><div style="position:absolute;left:22.40px;top:153.00px;width:1001.60px;height:517.00px;background:#fff"></div><div style="position:absolute;left:22.40px;top:153.00px;width:1001.60px;height:13.58px;background:#f2f2f2"></div><div style="position:absolute;left:138.10px;top:140.00px;width:0.80px;height:13.00px;background:#dcdcdc"></div><div style="position:absolute;left:222.20px;top:140.00px;width:0.80px;height:13.00px;background:#dcdcdc"></div><div style="position:absolute;left:349.00px;top:140.00px;width:0.80px;height:13.00px;background:#dcdcdc"></div><div style="position:absolute;left:394.10px;top:140.00px;width:0.80px;height:13.00px;background:#dcdcdc"></div><div style="position:absolute;left:472.10px;top:140.00px;width:0.80px;height:13.00px;background:#dcdcdc"></div><div style="position:absolute;left:542.90px;top:140.00px;width:0.80px;height:13.00px;background:#dcdcdc"></div><div style="position:absolute;left:670.10px;top:140.00px;width:0.80px;height:13.00px;background:#dcdcdc"></div><div style="position:absolute;left:796.10px;top:140.00px;width:0.80px;height:13.00px;background:#dcdcdc"></div><div style="position:absolute;left:922.10px;top:140.00px;width:0.80px;height:13.00px;background:#dcdcdc"></div><div style="position:absolute;left:0.00px;top:152.10px;width:1024.00px;height:0.90px;background:#d2d2d2"></div><div style="position:absolute;left:543.30px;top:151.50px;width:127.20px;height:1.50px;background:#217346"></div><div style="position:absolute;left:21.90px;top:153.00px;width:0.85px;height:517.00px;background:#d6d6d6"></div><div style="position:absolute;left:21.00px;top:193.73px;width:1.60px;height:13.58px;background:#217346"></div><div class="t" style="left:77.38px;top:141.48px;font-size:9.2px;color:#666;transform:scaleX(0.8500);transform-origin:center 0;">A</div><div class="t" style="left:177.48px;top:141.48px;font-size:9.2px;color:#666;transform:scaleX(0.8500);transform-origin:center 0;">B</div><div class="t" style="left:282.68px;top:141.48px;font-size:9.2px;color:#666;transform:scaleX(0.8500);transform-origin:center 0;">C</div><div class="t" style="left:368.63px;top:141.48px;font-size:9.2px;color:#666;transform:scaleX(0.8500);transform-origin:center 0;">D</div><div class="t" style="left:430.43px;top:141.48px;font-size:9.2px;color:#666;transform:scaleX(0.8500);transform-origin:center 0;">E</div><div class="t" style="left:505.09px;top:141.48px;font-size:9.2px;color:#666;transform:scaleX(0.8500);transform-origin:center 0;">F</div><div class="t" style="left:603.32px;top:141.48px;font-size:9.2px;color:#217346;font-weight:700;transform:scaleX(0.8500);transform-origin:center 0;">G</div><div class="t" style="left:730.18px;top:141.48px;font-size:9.2px;color:#666;transform:scaleX(0.8500);transform-origin:center 0;">H</div><div class="t" style="left:858.22px;top:141.48px;font-size:9.2px;color:#666;transform:scaleX(0.8500);transform-origin:center 0;">I</div><div class="t" style="left:983.00px;top:141.48px;font-size:9.2px;color:#666;transform:scaleX(0.8500);transform-origin:center 0;">J</div><div style="position:absolute;left:0.00px;top:165.83px;width:21.90px;height:0.75px;background:#dedede"></div><div style="position:absolute;left:22.40px;top:179.40px;width:1001.60px;height:0.75px;background:#e3e3e3"></div><div style="position:absolute;left:0.00px;top:179.40px;width:21.90px;height:0.75px;background:#dedede"></div><div style="position:absolute;left:22.40px;top:192.98px;width:1001.60px;height:0.75px;background:#e3e3e3"></div><div style="position:absolute;left:0.00px;top:192.98px;width:21.90px;height:0.75px;background:#dedede"></div><div style="position:absolute;left:22.40px;top:206.55px;width:1001.60px;height:0.75px;background:#e3e3e3"></div><div style="position:absolute;left:0.00px;top:206.55px;width:21.90px;height:0.75px;background:#dedede"></div><div style="position:absolute;left:22.40px;top:220.13px;width:1001.60px;height:0.75px;background:#e3e3e3"></div><div style="position:absolute;left:0.00px;top:220.13px;width:21.90px;height:0.75px;background:#dedede"></div><div style="position:absolute;left:22.40px;top:233.71px;width:1001.60px;height:0.75px;background:#e3e3e3"></div><div style="position:absolute;left:0.00px;top:233.71px;width:21.90px;height:0.75px;background:#dedede"></div><div style="position:absolute;left:22.40px;top:247.28px;width:1001.60px;height:0.75px;background:#e3e3e3"></div><div style="position:absolute;left:0.00px;top:247.28px;width:21.90px;height:0.75px;background:#dedede"></div><div style="position:absolute;left:22.40px;top:260.86px;width:1001.60px;height:0.75px;background:#e3e3e3"></div><div style="position:absolute;left:0.00px;top:260.86px;width:21.90px;height:0.75px;background:#dedede"></div><div style="position:absolute;left:22.40px;top:274.43px;width:1001.60px;height:0.75px;background:#e3e3e3"></div><div style="position:absolute;left:0.00px;top:274.43px;width:21.90px;height:0.75px;background:#dedede"></div><div style="position:absolute;left:22.40px;top:288.01px;width:1001.60px;height:0.75px;background:#e3e3e3"></div><div style="position:absolute;left:0.00px;top:288.01px;width:21.90px;height:0.75px;background:#dedede"></div><div style="position:absolute;left:22.40px;top:301.59px;width:1001.60px;height:0.75px;background:#e3e3e3"></div><div style="position:absolute;left:0.00px;top:301.59px;width:21.90px;height:0.75px;background:#dedede"></div><div style="position:absolute;left:22.40px;top:315.16px;width:1001.60px;height:0.75px;background:#e3e3e3"></div><div style="position:absolute;left:0.00px;top:315.16px;width:21.90px;height:0.75px;background:#dedede"></div><div style="position:absolute;left:22.40px;top:328.74px;width:1001.60px;height:0.75px;background:#e3e3e3"></div><div style="position:absolute;left:0.00px;top:328.74px;width:21.90px;height:0.75px;background:#dedede"></div><div style="position:absolute;left:22.40px;top:342.31px;width:1001.60px;height:0.75px;background:#e3e3e3"></div><div style="position:absolute;left:0.00px;top:342.31px;width:21.90px;height:0.75px;background:#dedede"></div><div style="position:absolute;left:22.40px;top:355.89px;width:1001.60px;height:0.75px;background:#e3e3e3"></div><div style="position:absolute;left:0.00px;top:355.89px;width:21.90px;height:0.75px;background:#dedede"></div><div style="position:absolute;left:22.40px;top:369.47px;width:1001.60px;height:0.75px;background:#e3e3e3"></div><div style="position:absolute;left:0.00px;top:369.47px;width:21.90px;height:0.75px;background:#dedede"></div><div style="position:absolute;left:22.40px;top:383.04px;width:1001.60px;height:0.75px;background:#e3e3e3"></div><div style="position:absolute;left:0.00px;top:383.04px;width:21.90px;height:0.75px;background:#dedede"></div><div style="position:absolute;left:22.40px;top:396.62px;width:1001.60px;height:0.75px;background:#e3e3e3"></div><div style="position:absolute;left:0.00px;top:396.62px;width:21.90px;height:0.75px;background:#dedede"></div><div style="position:absolute;left:22.40px;top:410.19px;width:1001.60px;height:0.75px;background:#e3e3e3"></div><div style="position:absolute;left:0.00px;top:410.19px;width:21.90px;height:0.75px;background:#dedede"></div><div style="position:absolute;left:22.40px;top:423.77px;width:1001.60px;height:0.75px;background:#e3e3e3"></div><div style="position:absolute;left:0.00px;top:423.77px;width:21.90px;height:0.75px;background:#dedede"></div><div style="position:absolute;left:22.40px;top:437.35px;width:1001.60px;height:0.75px;background:#e3e3e3"></div><div style="position:absolute;left:0.00px;top:437.35px;width:21.90px;height:0.75px;background:#dedede"></div><div style="position:absolute;left:22.40px;top:450.92px;width:1001.60px;height:0.75px;background:#e3e3e3"></div><div style="position:absolute;left:0.00px;top:450.92px;width:21.90px;height:0.75px;background:#dedede"></div><div style="position:absolute;left:22.40px;top:464.50px;width:1001.60px;height:0.75px;background:#e3e3e3"></div><div style="position:absolute;left:0.00px;top:464.50px;width:21.90px;height:0.75px;background:#dedede"></div><div style="position:absolute;left:22.40px;top:478.07px;width:1001.60px;height:0.75px;background:#e3e3e3"></div><div style="position:absolute;left:0.00px;top:478.07px;width:21.90px;height:0.75px;background:#dedede"></div><div style="position:absolute;left:22.40px;top:491.65px;width:1001.60px;height:0.75px;background:#e3e3e3"></div><div style="position:absolute;left:0.00px;top:491.65px;width:21.90px;height:0.75px;background:#dedede"></div><div style="position:absolute;left:22.40px;top:505.23px;width:1001.60px;height:0.75px;background:#e3e3e3"></div><div style="position:absolute;left:0.00px;top:505.23px;width:21.90px;height:0.75px;background:#dedede"></div><div style="position:absolute;left:22.40px;top:518.80px;width:1001.60px;height:0.75px;background:#e3e3e3"></div><div style="position:absolute;left:0.00px;top:518.80px;width:21.90px;height:0.75px;background:#dedede"></div><div style="position:absolute;left:22.40px;top:532.38px;width:1001.60px;height:0.75px;background:#e3e3e3"></div><div style="position:absolute;left:0.00px;top:532.38px;width:21.90px;height:0.75px;background:#dedede"></div><div style="position:absolute;left:22.40px;top:545.95px;width:1001.60px;height:0.75px;background:#e3e3e3"></div><div style="position:absolute;left:0.00px;top:545.95px;width:21.90px;height:0.75px;background:#dedede"></div><div style="position:absolute;left:22.40px;top:559.53px;width:1001.60px;height:0.75px;background:#e3e3e3"></div><div style="position:absolute;left:0.00px;top:559.53px;width:21.90px;height:0.75px;background:#dedede"></div><div style="position:absolute;left:22.40px;top:573.11px;width:1001.60px;height:0.75px;background:#e3e3e3"></div><div style="position:absolute;left:0.00px;top:573.11px;width:21.90px;height:0.75px;background:#dedede"></div><div style="position:absolute;left:22.40px;top:586.68px;width:1001.60px;height:0.75px;background:#e3e3e3"></div><div style="position:absolute;left:0.00px;top:586.68px;width:21.90px;height:0.75px;background:#dedede"></div><div style="position:absolute;left:22.40px;top:600.26px;width:1001.60px;height:0.75px;background:#e3e3e3"></div><div style="position:absolute;left:0.00px;top:600.26px;width:21.90px;height:0.75px;background:#dedede"></div><div style="position:absolute;left:22.40px;top:613.83px;width:1001.60px;height:0.75px;background:#e3e3e3"></div><div style="position:absolute;left:0.00px;top:613.83px;width:21.90px;height:0.75px;background:#dedede"></div><div style="position:absolute;left:22.40px;top:627.41px;width:1001.60px;height:0.75px;background:#e3e3e3"></div><div style="position:absolute;left:0.00px;top:627.41px;width:21.90px;height:0.75px;background:#dedede"></div><div style="position:absolute;left:22.40px;top:640.99px;width:1001.60px;height:0.75px;background:#e3e3e3"></div><div style="position:absolute;left:0.00px;top:640.99px;width:21.90px;height:0.75px;background:#dedede"></div><div style="position:absolute;left:22.40px;top:654.56px;width:1001.60px;height:0.75px;background:#e3e3e3"></div><div style="position:absolute;left:0.00px;top:654.56px;width:21.90px;height:0.75px;background:#dedede"></div><div style="position:absolute;left:22.40px;top:668.14px;width:1001.60px;height:0.75px;background:#e3e3e3"></div><div style="position:absolute;left:0.00px;top:668.14px;width:21.90px;height:0.75px;background:#dedede"></div><div style="position:absolute;left:22.40px;top:681.71px;width:1001.60px;height:0.75px;background:#e3e3e3"></div><div style="position:absolute;left:0.00px;top:681.71px;width:21.90px;height:0.75px;background:#dedede"></div><div style="position:absolute;left:138.10px;top:166.58px;width:0.80px;height:503.42px;background:#e3e3e3"></div><div style="position:absolute;left:222.20px;top:166.58px;width:0.80px;height:503.42px;background:#e3e3e3"></div><div style="position:absolute;left:349.00px;top:166.58px;width:0.80px;height:503.42px;background:#e3e3e3"></div><div style="position:absolute;left:394.10px;top:166.58px;width:0.80px;height:503.42px;background:#e3e3e3"></div><div style="position:absolute;left:472.10px;top:166.58px;width:0.80px;height:503.42px;background:#e3e3e3"></div><div style="position:absolute;left:542.90px;top:166.58px;width:0.80px;height:503.42px;background:#e3e3e3"></div><div style="position:absolute;left:670.10px;top:166.58px;width:0.80px;height:54.30px;background:#e3e3e3"></div><div style="position:absolute;left:670.10px;top:234.46px;width:0.80px;height:435.54px;background:#e3e3e3"></div><div style="position:absolute;left:796.10px;top:166.58px;width:0.80px;height:54.30px;background:#e3e3e3"></div><div style="position:absolute;left:796.10px;top:234.46px;width:0.80px;height:435.54px;background:#e3e3e3"></div><div style="position:absolute;left:922.10px;top:166.58px;width:0.80px;height:54.30px;background:#e3e3e3"></div><div style="position:absolute;left:922.10px;top:234.46px;width:0.80px;height:435.54px;background:#e3e3e3"></div><div class="t" style="left:7.22px;top:157.23px;font-size:8.2px;color:#666;">1</div><div class="t" style="left:7.22px;top:170.81px;font-size:8.2px;color:#666;">2</div><div class="t" style="left:7.22px;top:184.38px;font-size:8.2px;color:#666;">3</div><div class="t" style="left:7.22px;top:197.96px;font-size:8.2px;color:#217346;font-weight:700;">4</div><div class="t" style="left:7.22px;top:211.53px;font-size:8.2px;color:#666;">5</div><div class="t" style="left:7.22px;top:225.11px;font-size:8.2px;color:#666;">6</div><div class="t" style="left:7.22px;top:238.69px;font-size:8.2px;color:#666;">7</div><div class="t" style="left:7.22px;top:252.26px;font-size:8.2px;color:#666;">8</div><div class="t" style="left:7.22px;top:265.84px;font-size:8.2px;color:#666;">9</div><div class="t" style="left:4.95px;top:279.41px;font-size:8.2px;color:#666;">10</div><div class="t" style="left:5.25px;top:292.99px;font-size:8.2px;color:#666;">11</div><div class="t" style="left:4.95px;top:306.57px;font-size:8.2px;color:#666;">12</div><div class="t" style="left:4.95px;top:320.14px;font-size:8.2px;color:#666;">13</div><div class="t" style="left:4.95px;top:333.72px;font-size:8.2px;color:#666;">14</div><div class="t" style="left:4.95px;top:347.29px;font-size:8.2px;color:#666;">15</div><div class="t" style="left:4.95px;top:360.87px;font-size:8.2px;color:#666;">16</div><div class="t" style="left:4.95px;top:374.45px;font-size:8.2px;color:#666;">17</div><div class="t" style="left:4.95px;top:388.02px;font-size:8.2px;color:#666;">18</div><div class="t" style="left:4.95px;top:401.60px;font-size:8.2px;color:#666;">19</div><div class="t" style="left:4.95px;top:415.17px;font-size:8.2px;color:#666;">20</div><div class="t" style="left:4.95px;top:428.75px;font-size:8.2px;color:#666;">21</div><div class="t" style="left:4.95px;top:442.33px;font-size:8.2px;color:#666;">22</div><div class="t" style="left:4.95px;top:455.90px;font-size:8.2px;color:#666;">23</div><div class="t" style="left:4.95px;top:469.48px;font-size:8.2px;color:#666;">24</div><div class="t" style="left:4.95px;top:483.05px;font-size:8.2px;color:#666;">25</div><div class="t" style="left:4.95px;top:496.63px;font-size:8.2px;color:#666;">26</div><div class="t" style="left:4.95px;top:510.21px;font-size:8.2px;color:#666;">27</div><div class="t" style="left:4.95px;top:523.78px;font-size:8.2px;color:#666;">28</div><div class="t" style="left:4.95px;top:537.36px;font-size:8.2px;color:#666;">29</div><div class="t" style="left:4.95px;top:550.93px;font-size:8.2px;color:#666;">30</div><div class="t" style="left:4.95px;top:564.51px;font-size:8.2px;color:#666;">31</div><div class="t" style="left:4.95px;top:578.09px;font-size:8.2px;color:#666;">32</div><div class="t" style="left:4.95px;top:591.66px;font-size:8.2px;color:#666;">33</div><div class="t" style="left:4.95px;top:605.24px;font-size:8.2px;color:#666;">34</div><div class="t" style="left:4.95px;top:618.81px;font-size:8.2px;color:#666;">35</div><div class="t" style="left:4.95px;top:632.39px;font-size:8.2px;color:#666;">36</div><div class="t" style="left:4.95px;top:645.97px;font-size:8.2px;color:#666;">37</div><div class="t" style="left:4.95px;top:659.54px;font-size:8.2px;color:#666;">38</div><div class="t" style="left:4.95px;top:673.12px;font-size:8.2px;color:#666;">39</div><div class="t" style="left:24.80px;top:156.15px;font-size:9px;color:#141414;font-weight:700;transform:scaleX(1.1103);transform-origin:left 0;">Report</div><div class="t" style="left:140.90px;top:156.15px;font-size:9px;color:#141414;font-weight:700;transform:scaleX(1.0637);transform-origin:left 0;">Table</div><div class="t" style="left:225.00px;top:156.15px;font-size:9px;color:#141414;font-weight:700;transform:scaleX(1.0955);transform-origin:left 0;">Field Name</div><div class="t" style="left:351.80px;top:156.15px;font-size:9px;color:#141414;font-weight:700;transform:scaleX(1.0515);transform-origin:left 0;">Level</div><div class="t" style="left:396.90px;top:156.15px;font-size:9px;color:#141414;font-weight:700;transform:scaleX(1.0618);transform-origin:left 0;">Type</div><div class="t" style="left:474.90px;top:156.15px;font-size:9px;color:#141414;font-weight:700;transform:scaleX(1.1008);transform-origin:left 0;">Is Hidden</div><div class="t" style="left:545.70px;top:156.15px;font-size:9px;color:#141414;font-weight:700;transform:scaleX(1.0364);transform-origin:left 0;">Expression</div><div class="t" style="left:672.90px;top:156.15px;font-size:9px;color:#141414;font-weight:700;transform:scaleX(1.1139);transform-origin:left 0;">Dependent Report</div><div class="t" style="left:798.90px;top:156.15px;font-size:9px;color:#141414;font-weight:700;transform:scaleX(1.0272);transform-origin:left 0;">Section</div><div class="t" style="left:924.90px;top:156.15px;font-size:9px;color:#141414;font-weight:700;transform:scaleX(1.0888);transform-origin:left 0;">Visual</div><div class="t" style="left:24.80px;top:169.73px;font-size:9px;color:#141414;transform:scaleX(1.0285);transform-origin:left 0;-webkit-text-stroke:0.2px #141414;">Data Model Sample.pbit</div><div class="t" style="left:140.90px;top:169.73px;font-size:9px;color:#141414;transform:scaleX(1.0220);transform-origin:left 0;-webkit-text-stroke:0.2px #141414;">WIP</div><div class="t" style="left:225.00px;top:169.73px;font-size:9px;color:#141414;transform:scaleX(1.0220);transform-origin:left 0;-webkit-text-stroke:0.2px #141414;">Year</div><div class="t" style="left:396.90px;top:169.73px;font-size:9px;color:#141414;transform:scaleX(0.9458);transform-origin:left 0;-webkit-text-stroke:0.2px #141414;">COLUMN</div><div class="t" style="left:495.65px;top:169.73px;font-size:9px;color:#141414;transform:scaleX(0.8735);transform-origin:center 0;-webkit-text-stroke:0.2px #141414;">TRUE</div><div class="t" style="left:672.90px;top:169.73px;font-size:9px;color:#141414;transform:scaleX(1.0285);transform-origin:left 0;-webkit-text-stroke:0.2px #141414;">Data Model Sample.pbit</div><div class="t" style="left:24.80px;top:183.30px;font-size:9px;color:#141414;transform:scaleX(1.0285);transform-origin:left 0;-webkit-text-stroke:0.2px #141414;">Data Model Sample.pbit</div><div class="t" style="left:140.90px;top:183.30px;font-size:9px;color:#141414;transform:scaleX(1.0220);transform-origin:left 0;-webkit-text-stroke:0.2px #141414;">WIP</div><div class="t" style="left:225.00px;top:183.30px;font-size:9px;color:#141414;transform:scaleX(1.0220);transform-origin:left 0;-webkit-text-stroke:0.2px #141414;">Period</div><div class="t" style="left:396.90px;top:183.30px;font-size:9px;color:#141414;transform:scaleX(0.9458);transform-origin:left 0;-webkit-text-stroke:0.2px #141414;">COLUMN</div><div class="t" style="left:495.65px;top:183.30px;font-size:9px;color:#141414;transform:scaleX(0.8735);transform-origin:center 0;-webkit-text-stroke:0.2px #141414;">TRUE</div><div class="t" style="left:672.90px;top:183.30px;font-size:9px;color:#141414;transform:scaleX(1.0285);transform-origin:left 0;-webkit-text-stroke:0.2px #141414;">Data Model Sample.pbit</div><div class="t" style="left:24.80px;top:196.88px;font-size:9px;color:#141414;transform:scaleX(1.0285);transform-origin:left 0;-webkit-text-stroke:0.2px #141414;">Data Model Sample.pbit</div><div class="t" style="left:140.90px;top:196.88px;font-size:9px;color:#141414;transform:scaleX(1.0220);transform-origin:left 0;-webkit-text-stroke:0.2px #141414;">WIP</div><div class="t" style="left:225.00px;top:196.88px;font-size:9px;color:#141414;transform:scaleX(1.0220);transform-origin:left 0;-webkit-text-stroke:0.2px #141414;">BU</div><div class="t" style="left:396.90px;top:196.88px;font-size:9px;color:#141414;transform:scaleX(0.9458);transform-origin:left 0;-webkit-text-stroke:0.2px #141414;">COLUMN</div><div class="t" style="left:495.65px;top:196.88px;font-size:9px;color:#141414;transform:scaleX(0.8735);transform-origin:center 0;-webkit-text-stroke:0.2px #141414;">TRUE</div><div class="t" style="left:24.80px;top:210.45px;font-size:9px;color:#141414;transform:scaleX(1.0285);transform-origin:left 0;-webkit-text-stroke:0.2px #141414;">Data Model Sample.pbit</div><div class="t" style="left:140.90px;top:210.45px;font-size:9px;color:#141414;transform:scaleX(1.0220);transform-origin:left 0;-webkit-text-stroke:0.2px #141414;">WIP</div><div class="t" style="left:225.00px;top:210.45px;font-size:9px;color:#141414;transform:scaleX(1.0220);transform-origin:left 0;-webkit-text-stroke:0.2px #141414;">_Amount</div><div class="t" style="left:396.90px;top:210.45px;font-size:9px;color:#141414;transform:scaleX(0.9458);transform-origin:left 0;-webkit-text-stroke:0.2px #141414;">COLUMN</div><div class="t" style="left:495.65px;top:210.45px;font-size:9px;color:#141414;transform:scaleX(0.8735);transform-origin:center 0;-webkit-text-stroke:0.2px #141414;">TRUE</div><div class="t" style="left:24.80px;top:224.03px;font-size:9px;color:#141414;transform:scaleX(1.0285);transform-origin:left 0;-webkit-text-stroke:0.2px #141414;">Data Model Sample.pbit</div><div class="t" style="left:140.90px;top:224.03px;font-size:9px;color:#141414;transform:scaleX(1.0220);transform-origin:left 0;-webkit-text-stroke:0.2px #141414;">WIP</div><div class="t" style="left:225.00px;top:224.03px;font-size:9px;color:#141414;transform:scaleX(0.9942);transform-origin:left 0;-webkit-text-stroke:0.2px #141414;">_DateKey</div><div class="t" style="left:396.90px;top:224.03px;font-size:9px;color:#141414;transform:scaleX(0.9123);transform-origin:left 0;-webkit-text-stroke:0.2px #141414;">CALCULATED</div><div class="t" style="left:495.65px;top:224.03px;font-size:9px;color:#141414;transform:scaleX(0.8735);transform-origin:center 0;-webkit-text-stroke:0.2px #141414;">TRUE</div><div class="t" style="left:24.80px;top:237.61px;font-size:9px;color:#141414;transform:scaleX(1.0285);transform-origin:left 0;-webkit-text-stroke:0.2px #141414;">Data Model Sample.pbit</div><div class="t" style="left:140.90px;top:237.61px;font-size:9px;color:#141414;transform:scaleX(1.0158);transform-origin:left 0;-webkit-text-stroke:0.2px #141414;">Advanced Billing</div><div class="t" style="left:225.00px;top:237.61px;font-size:9px;color:#141414;transform:scaleX(1.0220);transform-origin:left 0;-webkit-text-stroke:0.2px #141414;">Year</div><div class="t" style="left:396.90px;top:237.61px;font-size:9px;color:#141414;transform:scaleX(0.9458);transform-origin:left 0;-webkit-text-stroke:0.2px #141414;">COLUMN</div><div class="t" style="left:495.65px;top:237.61px;font-size:9px;color:#141414;transform:scaleX(0.8735);transform-origin:center 0;-webkit-text-stroke:0.2px #141414;">TRUE</div><div class="t" style="left:672.90px;top:237.61px;font-size:9px;color:#141414;transform:scaleX(1.0285);transform-origin:left 0;-webkit-text-stroke:0.2px #141414;">Data Model Sample.pbit</div><div class="t" style="left:24.80px;top:251.18px;font-size:9px;color:#141414;transform:scaleX(1.0285);transform-origin:left 0;-webkit-text-stroke:0.2px #141414;">Data Model Sample.pbit</div><div class="t" style="left:140.90px;top:251.18px;font-size:9px;color:#141414;transform:scaleX(1.0158);transform-origin:left 0;-webkit-text-stroke:0.2px #141414;">Advanced Billing</div><div class="t" style="left:225.00px;top:251.18px;font-size:9px;color:#141414;transform:scaleX(1.0220);transform-origin:left 0;-webkit-text-stroke:0.2px #141414;">Period</div><div class="t" style="left:396.90px;top:251.18px;font-size:9px;color:#141414;transform:scaleX(0.9458);transform-origin:left 0;-webkit-text-stroke:0.2px #141414;">COLUMN</div><div class="t" style="left:495.65px;top:251.18px;font-size:9px;color:#141414;transform:scaleX(0.8735);transform-origin:center 0;-webkit-text-stroke:0.2px #141414;">TRUE</div><div class="t" style="left:672.90px;top:251.18px;font-size:9px;color:#141414;transform:scaleX(1.0285);transform-origin:left 0;-webkit-text-stroke:0.2px #141414;">Data Model Sample.pbit</div><div class="t" style="left:24.80px;top:264.76px;font-size:9px;color:#141414;transform:scaleX(1.0285);transform-origin:left 0;-webkit-text-stroke:0.2px #141414;">Data Model Sample.pbit</div><div class="t" style="left:140.90px;top:264.76px;font-size:9px;color:#141414;transform:scaleX(1.0158);transform-origin:left 0;-webkit-text-stroke:0.2px #141414;">Advanced Billing</div><div class="t" style="left:225.00px;top:264.76px;font-size:9px;color:#141414;transform:scaleX(1.0220);transform-origin:left 0;-webkit-text-stroke:0.2px #141414;">BU</div><div class="t" style="left:396.90px;top:264.76px;font-size:9px;color:#141414;transform:scaleX(0.9458);transform-origin:left 0;-webkit-text-stroke:0.2px #141414;">COLUMN</div><div class="t" style="left:495.65px;top:264.76px;font-size:9px;color:#141414;transform:scaleX(0.8735);transform-origin:center 0;-webkit-text-stroke:0.2px #141414;">TRUE</div><div class="t" style="left:24.80px;top:278.33px;font-size:9px;color:#141414;transform:scaleX(1.0285);transform-origin:left 0;-webkit-text-stroke:0.2px #141414;">Data Model Sample.pbit</div><div class="t" style="left:140.90px;top:278.33px;font-size:9px;color:#141414;transform:scaleX(1.0158);transform-origin:left 0;-webkit-text-stroke:0.2px #141414;">Advanced Billing</div><div class="t" style="left:225.00px;top:278.33px;font-size:9px;color:#141414;transform:scaleX(1.0220);transform-origin:left 0;-webkit-text-stroke:0.2px #141414;">_Amount</div><div class="t" style="left:396.90px;top:278.33px;font-size:9px;color:#141414;transform:scaleX(0.9458);transform-origin:left 0;-webkit-text-stroke:0.2px #141414;">COLUMN</div><div class="t" style="left:495.65px;top:278.33px;font-size:9px;color:#141414;transform:scaleX(0.8735);transform-origin:center 0;-webkit-text-stroke:0.2px #141414;">TRUE</div><div class="t" style="left:24.80px;top:291.91px;font-size:9px;color:#141414;transform:scaleX(1.0285);transform-origin:left 0;-webkit-text-stroke:0.2px #141414;">Data Model Sample.pbit</div><div class="t" style="left:140.90px;top:291.91px;font-size:9px;color:#141414;transform:scaleX(1.0158);transform-origin:left 0;-webkit-text-stroke:0.2px #141414;">Advanced Billing</div><div class="t" style="left:225.00px;top:291.91px;font-size:9px;color:#141414;transform:scaleX(0.9942);transform-origin:left 0;-webkit-text-stroke:0.2px #141414;">_DateKey</div><div class="t" style="left:396.90px;top:291.91px;font-size:9px;color:#141414;transform:scaleX(0.9123);transform-origin:left 0;-webkit-text-stroke:0.2px #141414;">CALCULATED</div><div class="t" style="left:495.65px;top:291.91px;font-size:9px;color:#141414;transform:scaleX(0.8735);transform-origin:center 0;-webkit-text-stroke:0.2px #141414;">TRUE</div><div class="t" style="left:24.80px;top:305.49px;font-size:9px;color:#141414;transform:scaleX(1.0285);transform-origin:left 0;-webkit-text-stroke:0.2px #141414;">Data Model Sample.pbit</div><div class="t" style="left:140.90px;top:305.49px;font-size:9px;color:#141414;transform:scaleX(1.0220);transform-origin:left 0;-webkit-text-stroke:0.2px #141414;">Accruals</div><div class="t" style="left:225.00px;top:305.49px;font-size:9px;color:#141414;transform:scaleX(1.0220);transform-origin:left 0;-webkit-text-stroke:0.2px #141414;">Year</div><div class="t" style="left:396.90px;top:305.49px;font-size:9px;color:#141414;transform:scaleX(0.9458);transform-origin:left 0;-webkit-text-stroke:0.2px #141414;">COLUMN</div><div class="t" style="left:495.65px;top:305.49px;font-size:9px;color:#141414;transform:scaleX(0.8735);transform-origin:center 0;-webkit-text-stroke:0.2px #141414;">TRUE</div><div class="t" style="left:672.90px;top:305.49px;font-size:9px;color:#141414;transform:scaleX(1.0285);transform-origin:left 0;-webkit-text-stroke:0.2px #141414;">Data Model Sample.pbit</div><div class="t" style="left:24.80px;top:319.06px;font-size:9px;color:#141414;transform:scaleX(1.0285);transform-origin:left 0;-webkit-text-stroke:0.2px #141414;">Data Model Sample.pbit</div><div class="t" style="left:140.90px;top:319.06px;font-size:9px;color:#141414;transform:scaleX(1.0220);transform-origin:left 0;-webkit-text-stroke:0.2px #141414;">Accruals</div><div class="t" style="left:225.00px;top:319.06px;font-size:9px;color:#141414;transform:scaleX(1.0220);transform-origin:left 0;-webkit-text-stroke:0.2px #141414;">Period</div><div class="t" style="left:396.90px;top:319.06px;font-size:9px;color:#141414;transform:scaleX(0.9458);transform-origin:left 0;-webkit-text-stroke:0.2px #141414;">COLUMN</div><div class="t" style="left:495.65px;top:319.06px;font-size:9px;color:#141414;transform:scaleX(0.8735);transform-origin:center 0;-webkit-text-stroke:0.2px #141414;">TRUE</div><div class="t" style="left:672.90px;top:319.06px;font-size:9px;color:#141414;transform:scaleX(1.0285);transform-origin:left 0;-webkit-text-stroke:0.2px #141414;">Data Model Sample.pbit</div><div class="t" style="left:24.80px;top:332.64px;font-size:9px;color:#141414;transform:scaleX(1.0285);transform-origin:left 0;-webkit-text-stroke:0.2px #141414;">Data Model Sample.pbit</div><div class="t" style="left:140.90px;top:332.64px;font-size:9px;color:#141414;transform:scaleX(1.0183);transform-origin:left 0;-webkit-text-stroke:0.2px #141414;">Prepayments</div><div class="t" style="left:225.00px;top:332.64px;font-size:9px;color:#141414;transform:scaleX(1.0220);transform-origin:left 0;-webkit-text-stroke:0.2px #141414;">Year</div><div class="t" style="left:396.90px;top:332.64px;font-size:9px;color:#141414;transform:scaleX(0.9458);transform-origin:left 0;-webkit-text-stroke:0.2px #141414;">COLUMN</div><div class="t" style="left:495.65px;top:332.64px;font-size:9px;color:#141414;transform:scaleX(0.8735);transform-origin:center 0;-webkit-text-stroke:0.2px #141414;">TRUE</div><div class="t" style="left:672.90px;top:332.64px;font-size:9px;color:#141414;transform:scaleX(1.0285);transform-origin:left 0;-webkit-text-stroke:0.2px #141414;">Data Model Sample.pbit</div><div class="t" style="left:24.80px;top:346.21px;font-size:9px;color:#141414;transform:scaleX(1.0285);transform-origin:left 0;-webkit-text-stroke:0.2px #141414;">Data Model Sample.pbit</div><div class="t" style="left:140.90px;top:346.21px;font-size:9px;color:#141414;transform:scaleX(1.0183);transform-origin:left 0;-webkit-text-stroke:0.2px #141414;">Prepayments</div><div class="t" style="left:225.00px;top:346.21px;font-size:9px;color:#141414;transform:scaleX(1.0220);transform-origin:left 0;-webkit-text-stroke:0.2px #141414;">Period</div><div class="t" style="left:396.90px;top:346.21px;font-size:9px;color:#141414;transform:scaleX(0.9458);transform-origin:left 0;-webkit-text-stroke:0.2px #141414;">COLUMN</div><div class="t" style="left:495.65px;top:346.21px;font-size:9px;color:#141414;transform:scaleX(0.8735);transform-origin:center 0;-webkit-text-stroke:0.2px #141414;">TRUE</div><div class="t" style="left:672.90px;top:346.21px;font-size:9px;color:#141414;transform:scaleX(1.0285);transform-origin:left 0;-webkit-text-stroke:0.2px #141414;">Data Model Sample.pbit</div><div class="t" style="left:24.80px;top:359.79px;font-size:9px;color:#141414;transform:scaleX(1.0285);transform-origin:left 0;-webkit-text-stroke:0.2px #141414;">Data Model Sample.pbit</div><div class="t" style="left:140.90px;top:359.79px;font-size:9px;color:#141414;transform:scaleX(1.0183);transform-origin:left 0;-webkit-text-stroke:0.2px #141414;">Prepayments</div><div class="t" style="left:225.00px;top:359.79px;font-size:9px;color:#141414;transform:scaleX(1.0220);transform-origin:left 0;-webkit-text-stroke:0.2px #141414;">BU Mapping</div><div class="t" style="left:396.90px;top:359.79px;font-size:9px;color:#141414;transform:scaleX(0.9458);transform-origin:left 0;-webkit-text-stroke:0.2px #141414;">COLUMN</div><div class="t" style="left:495.65px;top:359.79px;font-size:9px;color:#141414;transform:scaleX(0.8735);transform-origin:center 0;-webkit-text-stroke:0.2px #141414;">TRUE</div><div class="t" style="left:24.80px;top:373.37px;font-size:9px;color:#141414;transform:scaleX(1.0285);transform-origin:left 0;-webkit-text-stroke:0.2px #141414;">Data Model Sample.pbit</div><div class="t" style="left:140.90px;top:373.37px;font-size:9px;color:#141414;transform:scaleX(1.0183);transform-origin:left 0;-webkit-text-stroke:0.2px #141414;">Prepayments</div><div class="t" style="left:225.00px;top:373.37px;font-size:9px;color:#141414;transform:scaleX(1.0220);transform-origin:left 0;-webkit-text-stroke:0.2px #141414;">Initial Value</div><div class="t" style="left:396.90px;top:373.37px;font-size:9px;color:#141414;transform:scaleX(0.9458);transform-origin:left 0;-webkit-text-stroke:0.2px #141414;">COLUMN</div><div class="t" style="left:495.65px;top:373.37px;font-size:9px;color:#141414;transform:scaleX(0.8735);transform-origin:center 0;-webkit-text-stroke:0.2px #141414;">TRUE</div><div class="t" style="left:24.80px;top:386.94px;font-size:9px;color:#141414;transform:scaleX(1.0285);transform-origin:left 0;-webkit-text-stroke:0.2px #141414;">Data Model Sample.pbit</div><div class="t" style="left:140.90px;top:386.94px;font-size:9px;color:#141414;transform:scaleX(1.0183);transform-origin:left 0;-webkit-text-stroke:0.2px #141414;">Prepayments</div><div class="t" style="left:225.00px;top:386.94px;font-size:9px;color:#141414;transform:scaleX(1.0596);transform-origin:left 0;-webkit-text-stroke:0.2px #141414;">Cummulative Amount Amortised</div><div class="t" style="left:396.90px;top:386.94px;font-size:9px;color:#141414;transform:scaleX(0.9458);transform-origin:left 0;-webkit-text-stroke:0.2px #141414;">COLUMN</div><div class="t" style="left:495.65px;top:386.94px;font-size:9px;color:#141414;transform:scaleX(0.8735);transform-origin:center 0;-webkit-text-stroke:0.2px #141414;">TRUE</div><div class="t" style="left:24.80px;top:400.52px;font-size:9px;color:#141414;transform:scaleX(1.0285);transform-origin:left 0;-webkit-text-stroke:0.2px #141414;">Data Model Sample.pbit</div><div class="t" style="left:140.90px;top:400.52px;font-size:9px;color:#141414;transform:scaleX(1.0183);transform-origin:left 0;-webkit-text-stroke:0.2px #141414;">Prepayments</div><div class="t" style="left:225.00px;top:400.52px;font-size:9px;color:#141414;transform:scaleX(0.9942);transform-origin:left 0;-webkit-text-stroke:0.2px #141414;">_DateKey</div><div class="t" style="left:396.90px;top:400.52px;font-size:9px;color:#141414;transform:scaleX(0.9123);transform-origin:left 0;-webkit-text-stroke:0.2px #141414;">CALCULATED</div><div class="t" style="left:495.65px;top:400.52px;font-size:9px;color:#141414;transform:scaleX(0.8735);transform-origin:center 0;-webkit-text-stroke:0.2px #141414;">TRUE</div><div class="t" style="left:24.80px;top:414.09px;font-size:9px;color:#141414;transform:scaleX(1.0285);transform-origin:left 0;-webkit-text-stroke:0.2px #141414;">Data Model Sample.pbit</div><div class="t" style="left:140.90px;top:414.09px;font-size:9px;color:#141414;transform:scaleX(1.0220);transform-origin:left 0;-webkit-text-stroke:0.2px #141414;">BU</div><div class="t" style="left:225.00px;top:414.09px;font-size:9px;color:#141414;transform:scaleX(1.0220);transform-origin:left 0;-webkit-text-stroke:0.2px #141414;">Country</div><div class="t" style="left:396.90px;top:414.09px;font-size:9px;color:#141414;transform:scaleX(0.9458);transform-origin:left 0;-webkit-text-stroke:0.2px #141414;">COLUMN</div><div class="t" style="left:495.65px;top:414.09px;font-size:9px;color:#141414;transform:scaleX(0.8735);transform-origin:center 0;-webkit-text-stroke:0.2px #141414;">TRUE</div><div class="t" style="left:24.80px;top:427.67px;font-size:9px;color:#141414;transform:scaleX(1.0285);transform-origin:left 0;-webkit-text-stroke:0.2px #141414;">Data Model Sample.pbit</div><div class="t" style="left:140.90px;top:427.67px;font-size:9px;color:#141414;transform:scaleX(1.0220);transform-origin:left 0;-webkit-text-stroke:0.2px #141414;">BU</div><div class="t" style="left:225.00px;top:427.67px;font-size:9px;color:#141414;transform:scaleX(1.0220);transform-origin:left 0;-webkit-text-stroke:0.2px #141414;">Country</div><div class="t" style="left:396.90px;top:427.67px;font-size:9px;color:#141414;transform:scaleX(0.9458);transform-origin:left 0;-webkit-text-stroke:0.2px #141414;">COLUMN</div><div class="t" style="left:495.65px;top:427.67px;font-size:9px;color:#141414;transform:scaleX(0.8735);transform-origin:center 0;-webkit-text-stroke:0.2px #141414;">TRUE</div><div class="t" style="left:24.80px;top:441.25px;font-size:9px;color:#141414;transform:scaleX(1.0285);transform-origin:left 0;-webkit-text-stroke:0.2px #141414;">Data Model Sample.pbit</div><div class="t" style="left:140.90px;top:441.25px;font-size:9px;color:#141414;transform:scaleX(1.0220);transform-origin:left 0;-webkit-text-stroke:0.2px #141414;">BU</div><div class="t" style="left:225.00px;top:441.25px;font-size:9px;color:#141414;transform:scaleX(1.0220);transform-origin:left 0;-webkit-text-stroke:0.2px #141414;">Country</div><div class="t" style="left:396.90px;top:441.25px;font-size:9px;color:#141414;transform:scaleX(0.9458);transform-origin:left 0;-webkit-text-stroke:0.2px #141414;">COLUMN</div><div class="t" style="left:495.65px;top:441.25px;font-size:9px;color:#141414;transform:scaleX(0.8735);transform-origin:center 0;-webkit-text-stroke:0.2px #141414;">TRUE</div><div class="t" style="left:24.80px;top:454.82px;font-size:9px;color:#141414;transform:scaleX(1.0285);transform-origin:left 0;-webkit-text-stroke:0.2px #141414;">Data Model Sample.pbit</div><div class="t" style="left:140.90px;top:454.82px;font-size:9px;color:#141414;transform:scaleX(1.0220);transform-origin:left 0;-webkit-text-stroke:0.2px #141414;">BU</div><div class="t" style="left:225.00px;top:454.82px;font-size:9px;color:#141414;transform:scaleX(1.0220);transform-origin:left 0;-webkit-text-stroke:0.2px #141414;">BU Code</div><div class="t" style="left:396.90px;top:454.82px;font-size:9px;color:#141414;transform:scaleX(0.9458);transform-origin:left 0;-webkit-text-stroke:0.2px #141414;">COLUMN</div><div class="t" style="left:495.65px;top:454.82px;font-size:9px;color:#141414;transform:scaleX(0.8735);transform-origin:center 0;-webkit-text-stroke:0.2px #141414;">TRUE</div><div class="t" style="left:24.80px;top:468.40px;font-size:9px;color:#141414;transform:scaleX(1.0285);transform-origin:left 0;-webkit-text-stroke:0.2px #141414;">Data Model Sample.pbit</div><div class="t" style="left:140.90px;top:468.40px;font-size:9px;color:#141414;transform:scaleX(1.0220);transform-origin:left 0;-webkit-text-stroke:0.2px #141414;">BU</div><div class="t" style="left:225.00px;top:468.40px;font-size:9px;color:#141414;transform:scaleX(1.0220);transform-origin:left 0;-webkit-text-stroke:0.2px #141414;">BU Code</div><div class="t" style="left:396.90px;top:468.40px;font-size:9px;color:#141414;transform:scaleX(0.9458);transform-origin:left 0;-webkit-text-stroke:0.2px #141414;">COLUMN</div><div class="t" style="left:495.65px;top:468.40px;font-size:9px;color:#141414;transform:scaleX(0.8735);transform-origin:center 0;-webkit-text-stroke:0.2px #141414;">TRUE</div><div class="t" style="left:24.80px;top:481.97px;font-size:9px;color:#141414;transform:scaleX(1.0285);transform-origin:left 0;-webkit-text-stroke:0.2px #141414;">Data Model Sample.pbit</div><div class="t" style="left:140.90px;top:481.97px;font-size:9px;color:#141414;transform:scaleX(1.0220);transform-origin:left 0;-webkit-text-stroke:0.2px #141414;">BU</div><div class="t" style="left:225.00px;top:481.97px;font-size:9px;color:#141414;transform:scaleX(1.0220);transform-origin:left 0;-webkit-text-stroke:0.2px #141414;">BU Code</div><div class="t" style="left:396.90px;top:481.97px;font-size:9px;color:#141414;transform:scaleX(0.9458);transform-origin:left 0;-webkit-text-stroke:0.2px #141414;">COLUMN</div><div class="t" style="left:495.65px;top:481.97px;font-size:9px;color:#141414;transform:scaleX(0.8735);transform-origin:center 0;-webkit-text-stroke:0.2px #141414;">TRUE</div><div class="t" style="left:24.80px;top:495.55px;font-size:9px;color:#141414;transform:scaleX(1.0285);transform-origin:left 0;-webkit-text-stroke:0.2px #141414;">Data Model Sample.pbit</div><div class="t" style="left:140.90px;top:495.55px;font-size:9px;color:#141414;transform:scaleX(1.0220);transform-origin:left 0;-webkit-text-stroke:0.2px #141414;">Date</div><div class="t" style="left:225.00px;top:495.55px;font-size:9px;color:#141414;transform:scaleX(1.0220);transform-origin:left 0;-webkit-text-stroke:0.2px #141414;">DateKey</div><div class="t" style="left:396.90px;top:495.55px;font-size:9px;color:#141414;transform:scaleX(0.9458);transform-origin:left 0;-webkit-text-stroke:0.2px #141414;">COLUMN</div><div class="t" style="left:493.89px;top:495.55px;font-size:9px;color:#141414;transform:scaleX(0.8317);transform-origin:center 0;-webkit-text-stroke:0.2px #141414;">FALSE</div><div class="t" style="left:672.90px;top:495.55px;font-size:9px;color:#141414;transform:scaleX(1.0285);transform-origin:left 0;-webkit-text-stroke:0.2px #141414;">Data Model Sample.pbit</div><div class="t" style="left:24.80px;top:509.13px;font-size:9px;color:#141414;transform:scaleX(1.0285);transform-origin:left 0;-webkit-text-stroke:0.2px #141414;">Data Model Sample.pbit</div><div class="t" style="left:140.90px;top:509.13px;font-size:9px;color:#141414;transform:scaleX(1.0220);transform-origin:left 0;-webkit-text-stroke:0.2px #141414;">Date</div><div class="t" style="left:225.00px;top:509.13px;font-size:9px;color:#141414;transform:scaleX(1.0220);transform-origin:left 0;-webkit-text-stroke:0.2px #141414;">DateKey</div><div class="t" style="left:396.90px;top:509.13px;font-size:9px;color:#141414;transform:scaleX(0.9458);transform-origin:left 0;-webkit-text-stroke:0.2px #141414;">COLUMN</div><div class="t" style="left:493.89px;top:509.13px;font-size:9px;color:#141414;transform:scaleX(0.8317);transform-origin:center 0;-webkit-text-stroke:0.2px #141414;">FALSE</div><div class="t" style="left:672.90px;top:509.13px;font-size:9px;color:#141414;transform:scaleX(1.0285);transform-origin:left 0;-webkit-text-stroke:0.2px #141414;">Data Model Sample.pbit</div><div class="t" style="left:24.80px;top:522.70px;font-size:9px;color:#141414;transform:scaleX(1.0285);transform-origin:left 0;-webkit-text-stroke:0.2px #141414;">Data Model Sample.pbit</div><div class="t" style="left:140.90px;top:522.70px;font-size:9px;color:#141414;transform:scaleX(1.0220);transform-origin:left 0;-webkit-text-stroke:0.2px #141414;">Date</div><div class="t" style="left:225.00px;top:522.70px;font-size:9px;color:#141414;transform:scaleX(1.0220);transform-origin:left 0;-webkit-text-stroke:0.2px #141414;">DateKey</div><div class="t" style="left:396.90px;top:522.70px;font-size:9px;color:#141414;transform:scaleX(0.9458);transform-origin:left 0;-webkit-text-stroke:0.2px #141414;">COLUMN</div><div class="t" style="left:493.89px;top:522.70px;font-size:9px;color:#141414;transform:scaleX(0.8317);transform-origin:center 0;-webkit-text-stroke:0.2px #141414;">FALSE</div><div class="t" style="left:672.90px;top:522.70px;font-size:9px;color:#141414;transform:scaleX(1.0285);transform-origin:left 0;-webkit-text-stroke:0.2px #141414;">Data Model Sample.pbit</div><div class="t" style="left:24.80px;top:536.28px;font-size:9px;color:#141414;transform:scaleX(1.0285);transform-origin:left 0;-webkit-text-stroke:0.2px #141414;">Data Model Sample.pbit</div><div class="t" style="left:140.90px;top:536.28px;font-size:9px;color:#141414;transform:scaleX(1.0220);transform-origin:left 0;-webkit-text-stroke:0.2px #141414;">Date</div><div class="t" style="left:225.00px;top:536.28px;font-size:9px;color:#141414;transform:scaleX(1.0220);transform-origin:left 0;-webkit-text-stroke:0.2px #141414;">DateKey</div><div class="t" style="left:396.90px;top:536.28px;font-size:9px;color:#141414;transform:scaleX(0.9458);transform-origin:left 0;-webkit-text-stroke:0.2px #141414;">COLUMN</div><div class="t" style="left:493.89px;top:536.28px;font-size:9px;color:#141414;transform:scaleX(0.8317);transform-origin:center 0;-webkit-text-stroke:0.2px #141414;">FALSE</div><div class="t" style="left:672.90px;top:536.28px;font-size:9px;color:#141414;transform:scaleX(1.0285);transform-origin:left 0;-webkit-text-stroke:0.2px #141414;">Data Model Sample.pbit</div><div class="t" style="left:24.80px;top:549.85px;font-size:9px;color:#141414;transform:scaleX(1.0285);transform-origin:left 0;-webkit-text-stroke:0.2px #141414;">Data Model Sample.pbit</div><div class="t" style="left:140.90px;top:549.85px;font-size:9px;color:#141414;transform:scaleX(1.0220);transform-origin:left 0;-webkit-text-stroke:0.2px #141414;">Date</div><div class="t" style="left:225.00px;top:549.85px;font-size:9px;color:#141414;transform:scaleX(1.0220);transform-origin:left 0;-webkit-text-stroke:0.2px #141414;">DateKey</div><div class="t" style="left:396.90px;top:549.85px;font-size:9px;color:#141414;transform:scaleX(0.9458);transform-origin:left 0;-webkit-text-stroke:0.2px #141414;">COLUMN</div><div class="t" style="left:493.89px;top:549.85px;font-size:9px;color:#141414;transform:scaleX(0.8317);transform-origin:center 0;-webkit-text-stroke:0.2px #141414;">FALSE</div><div class="t" style="left:672.90px;top:549.85px;font-size:9px;color:#141414;transform:scaleX(1.0285);transform-origin:left 0;-webkit-text-stroke:0.2px #141414;">Data Model Sample.pbit</div><div class="t" style="left:24.80px;top:563.43px;font-size:9px;color:#141414;transform:scaleX(1.0285);transform-origin:left 0;-webkit-text-stroke:0.2px #141414;">Data Model Sample.pbit</div><div class="t" style="left:140.90px;top:563.43px;font-size:9px;color:#141414;transform:scaleX(1.0220);transform-origin:left 0;-webkit-text-stroke:0.2px #141414;">Date</div><div class="t" style="left:225.00px;top:563.43px;font-size:9px;color:#141414;transform:scaleX(1.0220);transform-origin:left 0;-webkit-text-stroke:0.2px #141414;">DateKey</div><div class="t" style="left:396.90px;top:563.43px;font-size:9px;color:#141414;transform:scaleX(0.9458);transform-origin:left 0;-webkit-text-stroke:0.2px #141414;">COLUMN</div><div class="t" style="left:493.89px;top:563.43px;font-size:9px;color:#141414;transform:scaleX(0.8317);transform-origin:center 0;-webkit-text-stroke:0.2px #141414;">FALSE</div><div class="t" style="left:672.90px;top:563.43px;font-size:9px;color:#141414;transform:scaleX(1.0285);transform-origin:left 0;-webkit-text-stroke:0.2px #141414;">Data Model Sample.pbit</div><div class="t" style="left:24.80px;top:577.01px;font-size:9px;color:#141414;transform:scaleX(1.0285);transform-origin:left 0;-webkit-text-stroke:0.2px #141414;">Data Model Sample.pbit</div><div class="t" style="left:140.90px;top:577.01px;font-size:9px;color:#141414;transform:scaleX(1.0220);transform-origin:left 0;-webkit-text-stroke:0.2px #141414;">Date</div><div class="t" style="left:225.00px;top:577.01px;font-size:9px;color:#141414;transform:scaleX(1.0220);transform-origin:left 0;-webkit-text-stroke:0.2px #141414;">DateKey</div><div class="t" style="left:396.90px;top:577.01px;font-size:9px;color:#141414;transform:scaleX(0.9458);transform-origin:left 0;-webkit-text-stroke:0.2px #141414;">COLUMN</div><div class="t" style="left:493.89px;top:577.01px;font-size:9px;color:#141414;transform:scaleX(0.8317);transform-origin:center 0;-webkit-text-stroke:0.2px #141414;">FALSE</div><div class="t" style="left:672.90px;top:577.01px;font-size:9px;color:#141414;transform:scaleX(1.0285);transform-origin:left 0;-webkit-text-stroke:0.2px #141414;">Data Model Sample.pbit</div><div class="t" style="left:24.80px;top:590.58px;font-size:9px;color:#141414;transform:scaleX(1.0285);transform-origin:left 0;-webkit-text-stroke:0.2px #141414;">Data Model Sample.pbit</div><div class="t" style="left:140.90px;top:590.58px;font-size:9px;color:#141414;transform:scaleX(1.0220);transform-origin:left 0;-webkit-text-stroke:0.2px #141414;">Date</div><div class="t" style="left:225.00px;top:590.58px;font-size:9px;color:#141414;transform:scaleX(1.0220);transform-origin:left 0;-webkit-text-stroke:0.2px #141414;">DateKey</div><div class="t" style="left:396.90px;top:590.58px;font-size:9px;color:#141414;transform:scaleX(0.9458);transform-origin:left 0;-webkit-text-stroke:0.2px #141414;">COLUMN</div><div class="t" style="left:493.89px;top:590.58px;font-size:9px;color:#141414;transform:scaleX(0.8317);transform-origin:center 0;-webkit-text-stroke:0.2px #141414;">FALSE</div><div class="t" style="left:672.90px;top:590.58px;font-size:9px;color:#141414;transform:scaleX(1.0220);transform-origin:left 0;-webkit-text-stroke:0.2px #141414;">Thin Report Test 03.pbit</div><div class="t" style="left:24.80px;top:604.16px;font-size:9px;color:#141414;transform:scaleX(1.0285);transform-origin:left 0;-webkit-text-stroke:0.2px #141414;">Data Model Sample.pbit</div><div class="t" style="left:140.90px;top:604.16px;font-size:9px;color:#141414;transform:scaleX(1.0220);transform-origin:left 0;-webkit-text-stroke:0.2px #141414;">Date</div><div class="t" style="left:225.00px;top:604.16px;font-size:9px;color:#141414;transform:scaleX(1.0220);transform-origin:left 0;-webkit-text-stroke:0.2px #141414;">Date</div><div class="t" style="left:396.90px;top:604.16px;font-size:9px;color:#141414;transform:scaleX(0.9458);transform-origin:left 0;-webkit-text-stroke:0.2px #141414;">COLUMN</div><div class="t" style="left:493.89px;top:604.16px;font-size:9px;color:#141414;transform:scaleX(0.8317);transform-origin:center 0;-webkit-text-stroke:0.2px #141414;">FALSE</div><div class="t" style="left:672.90px;top:604.16px;font-size:9px;color:#141414;transform:scaleX(1.0220);transform-origin:left 0;-webkit-text-stroke:0.2px #141414;">Thin Report Test 01.pbit</div><div class="t" style="left:798.90px;top:604.16px;font-size:9px;color:#141414;transform:scaleX(0.9008);transform-origin:left 0;-webkit-text-stroke:0.2px #141414;">Page 1</div><div class="t" style="left:924.90px;top:604.16px;font-size:9px;color:#141414;transform:scaleX(1.0180);transform-origin:left 0;-webkit-text-stroke:0.2px #141414;">e5bd3b355483a6b491b6f1</div><div class="t" style="left:24.80px;top:617.73px;font-size:9px;color:#141414;transform:scaleX(1.0285);transform-origin:left 0;-webkit-text-stroke:0.2px #141414;">Data Model Sample.pbit</div><div class="t" style="left:140.90px;top:617.73px;font-size:9px;color:#141414;transform:scaleX(1.0220);transform-origin:left 0;-webkit-text-stroke:0.2px #141414;">Date</div><div class="t" style="left:225.00px;top:617.73px;font-size:9px;color:#141414;transform:scaleX(1.0220);transform-origin:left 0;-webkit-text-stroke:0.2px #141414;">Date</div><div class="t" style="left:396.90px;top:617.73px;font-size:9px;color:#141414;transform:scaleX(0.9458);transform-origin:left 0;-webkit-text-stroke:0.2px #141414;">COLUMN</div><div class="t" style="left:493.89px;top:617.73px;font-size:9px;color:#141414;transform:scaleX(0.8317);transform-origin:center 0;-webkit-text-stroke:0.2px #141414;">FALSE</div><div class="t" style="left:672.90px;top:617.73px;font-size:9px;color:#141414;transform:scaleX(1.0220);transform-origin:left 0;-webkit-text-stroke:0.2px #141414;">Thin Report Test 03.pbit</div><div class="t" style="left:798.90px;top:617.73px;font-size:9px;color:#141414;transform:scaleX(0.9008);transform-origin:left 0;-webkit-text-stroke:0.2px #141414;">Page 1</div><div class="t" style="left:924.90px;top:617.73px;font-size:9px;color:#141414;transform:scaleX(1.0180);transform-origin:left 0;-webkit-text-stroke:0.2px #141414;">9fe142c6aa0904610dc2</div><div class="t" style="left:24.80px;top:631.31px;font-size:9px;color:#141414;transform:scaleX(1.0285);transform-origin:left 0;-webkit-text-stroke:0.2px #141414;">Data Model Sample.pbit</div><div class="t" style="left:140.90px;top:631.31px;font-size:9px;color:#141414;transform:scaleX(1.0220);transform-origin:left 0;-webkit-text-stroke:0.2px #141414;">Date</div><div class="t" style="left:225.00px;top:631.31px;font-size:9px;color:#141414;transform:scaleX(1.0220);transform-origin:left 0;-webkit-text-stroke:0.2px #141414;">Date</div><div class="t" style="left:396.90px;top:631.31px;font-size:9px;color:#141414;transform:scaleX(0.9458);transform-origin:left 0;-webkit-text-stroke:0.2px #141414;">COLUMN</div><div class="t" style="left:493.89px;top:631.31px;font-size:9px;color:#141414;transform:scaleX(0.8317);transform-origin:center 0;-webkit-text-stroke:0.2px #141414;">FALSE</div><div class="t" style="left:672.90px;top:631.31px;font-size:9px;color:#141414;transform:scaleX(1.0220);transform-origin:left 0;-webkit-text-stroke:0.2px #141414;">Thin Report Test 03.pbit</div><div class="t" style="left:798.90px;top:631.31px;font-size:9px;color:#141414;transform:scaleX(0.9008);transform-origin:left 0;-webkit-text-stroke:0.2px #141414;">Page 1</div><div class="t" style="left:924.90px;top:631.31px;font-size:9px;color:#141414;transform:scaleX(1.0180);transform-origin:left 0;-webkit-text-stroke:0.2px #141414;">5e921428cb589e2276da1</div><div class="t" style="left:24.80px;top:644.89px;font-size:9px;color:#141414;transform:scaleX(1.0285);transform-origin:left 0;-webkit-text-stroke:0.2px #141414;">Data Model Sample.pbit</div><div class="t" style="left:140.90px;top:644.89px;font-size:9px;color:#141414;transform:scaleX(1.0220);transform-origin:left 0;-webkit-text-stroke:0.2px #141414;">Date</div><div class="t" style="left:225.00px;top:644.89px;font-size:9px;color:#141414;transform:scaleX(1.0220);transform-origin:left 0;-webkit-text-stroke:0.2px #141414;">Date</div><div class="t" style="left:396.90px;top:644.89px;font-size:9px;color:#141414;transform:scaleX(0.9458);transform-origin:left 0;-webkit-text-stroke:0.2px #141414;">COLUMN</div><div class="t" style="left:493.89px;top:644.89px;font-size:9px;color:#141414;transform:scaleX(0.8317);transform-origin:center 0;-webkit-text-stroke:0.2px #141414;">FALSE</div><div class="t" style="left:672.90px;top:644.89px;font-size:9px;color:#141414;transform:scaleX(1.0220);transform-origin:left 0;-webkit-text-stroke:0.2px #141414;">Thin Report Test 03.pbit</div><div class="t" style="left:798.90px;top:644.89px;font-size:9px;color:#141414;transform:scaleX(0.9008);transform-origin:left 0;-webkit-text-stroke:0.2px #141414;">Page 1</div><div class="t" style="left:924.90px;top:644.89px;font-size:9px;color:#141414;transform:scaleX(1.0180);transform-origin:left 0;-webkit-text-stroke:0.2px #141414;">cd39510588d70c1acb05f</div><div class="t" style="left:24.80px;top:658.46px;font-size:9px;color:#141414;transform:scaleX(1.0285);transform-origin:left 0;-webkit-text-stroke:0.2px #141414;">Data Model Sample.pbit</div><div class="t" style="left:140.90px;top:658.46px;font-size:9px;color:#141414;transform:scaleX(1.0220);transform-origin:left 0;-webkit-text-stroke:0.2px #141414;">Date</div><div class="t" style="left:225.00px;top:658.46px;font-size:9px;color:#141414;transform:scaleX(1.0220);transform-origin:left 0;-webkit-text-stroke:0.2px #141414;">Date</div><div class="t" style="left:396.90px;top:658.46px;font-size:9px;color:#141414;transform:scaleX(0.9458);transform-origin:left 0;-webkit-text-stroke:0.2px #141414;">COLUMN</div><div class="t" style="left:493.89px;top:658.46px;font-size:9px;color:#141414;transform:scaleX(0.8317);transform-origin:center 0;-webkit-text-stroke:0.2px #141414;">FALSE</div><div class="t" style="left:672.90px;top:658.46px;font-size:9px;color:#141414;transform:scaleX(1.0220);transform-origin:left 0;-webkit-text-stroke:0.2px #141414;">Thin Report Test 02.pbit</div><div class="t" style="left:798.90px;top:658.46px;font-size:9px;color:#141414;transform:scaleX(0.9008);transform-origin:left 0;-webkit-text-stroke:0.2px #141414;">Page 1</div><div class="t" style="left:924.90px;top:658.46px;font-size:9px;color:#141414;transform:scaleX(1.0180);transform-origin:left 0;-webkit-text-stroke:0.2px #141414;">e5bd3b355483a6b491b6f1</div><div class="t" style="left:24.80px;top:672.04px;font-size:9px;color:#141414;transform:scaleX(1.0285);transform-origin:left 0;-webkit-text-stroke:0.2px #141414;">Data Model Sample.pbit</div><div class="t" style="left:140.90px;top:672.04px;font-size:9px;color:#141414;transform:scaleX(1.0220);transform-origin:left 0;-webkit-text-stroke:0.2px #141414;">Date</div><div class="t" style="left:225.00px;top:672.04px;font-size:9px;color:#141414;transform:scaleX(1.0220);transform-origin:left 0;-webkit-text-stroke:0.2px #141414;">Date</div><div class="t" style="left:396.90px;top:672.04px;font-size:9px;color:#141414;transform:scaleX(0.9458);transform-origin:left 0;-webkit-text-stroke:0.2px #141414;">COLUMN</div><div class="t" style="left:493.89px;top:672.04px;font-size:9px;color:#141414;transform:scaleX(0.8317);transform-origin:center 0;-webkit-text-stroke:0.2px #141414;">FALSE</div><div class="t" style="left:672.90px;top:672.04px;font-size:9px;color:#141414;transform:scaleX(1.0220);transform-origin:left 0;-webkit-text-stroke:0.2px #141414;">Thin Report Test 02.pbit</div><div class="t" style="left:798.90px;top:672.04px;font-size:9px;color:#141414;transform:scaleX(0.9008);transform-origin:left 0;-webkit-text-stroke:0.2px #141414;">Page 1</div><div class="t" style="left:924.90px;top:672.04px;font-size:9px;color:#141414;transform:scaleX(1.0180);transform-origin:left 0;-webkit-text-stroke:0.2px #141414;">e5bd3b355483a6b491b6f1</div><div class="t" style="left:545.70px;top:224.03px;font-size:9px;color:#141414;transform:scaleX(1.0170);transform-origin:left 0;-webkit-text-stroke:0.2px #141414;">LOOKUPVALUE('Date'[DateKey], 'Date'[Fiscal Year Short], 'WIP'[Year], 'Date'[Fiscal Month], 'WIP'[Period], 'Date'[Day], 1)</div><div style="position:absolute;left:542.80px;top:193.23px;width:127.90px;height:14.18px;border:1.4px solid #217346;box-sizing:border-box"></div><div style="position:absolute;left:668.90px;top:205.60px;width:3.20px;height:3.20px;background:#217346"></div>
</body></html>
